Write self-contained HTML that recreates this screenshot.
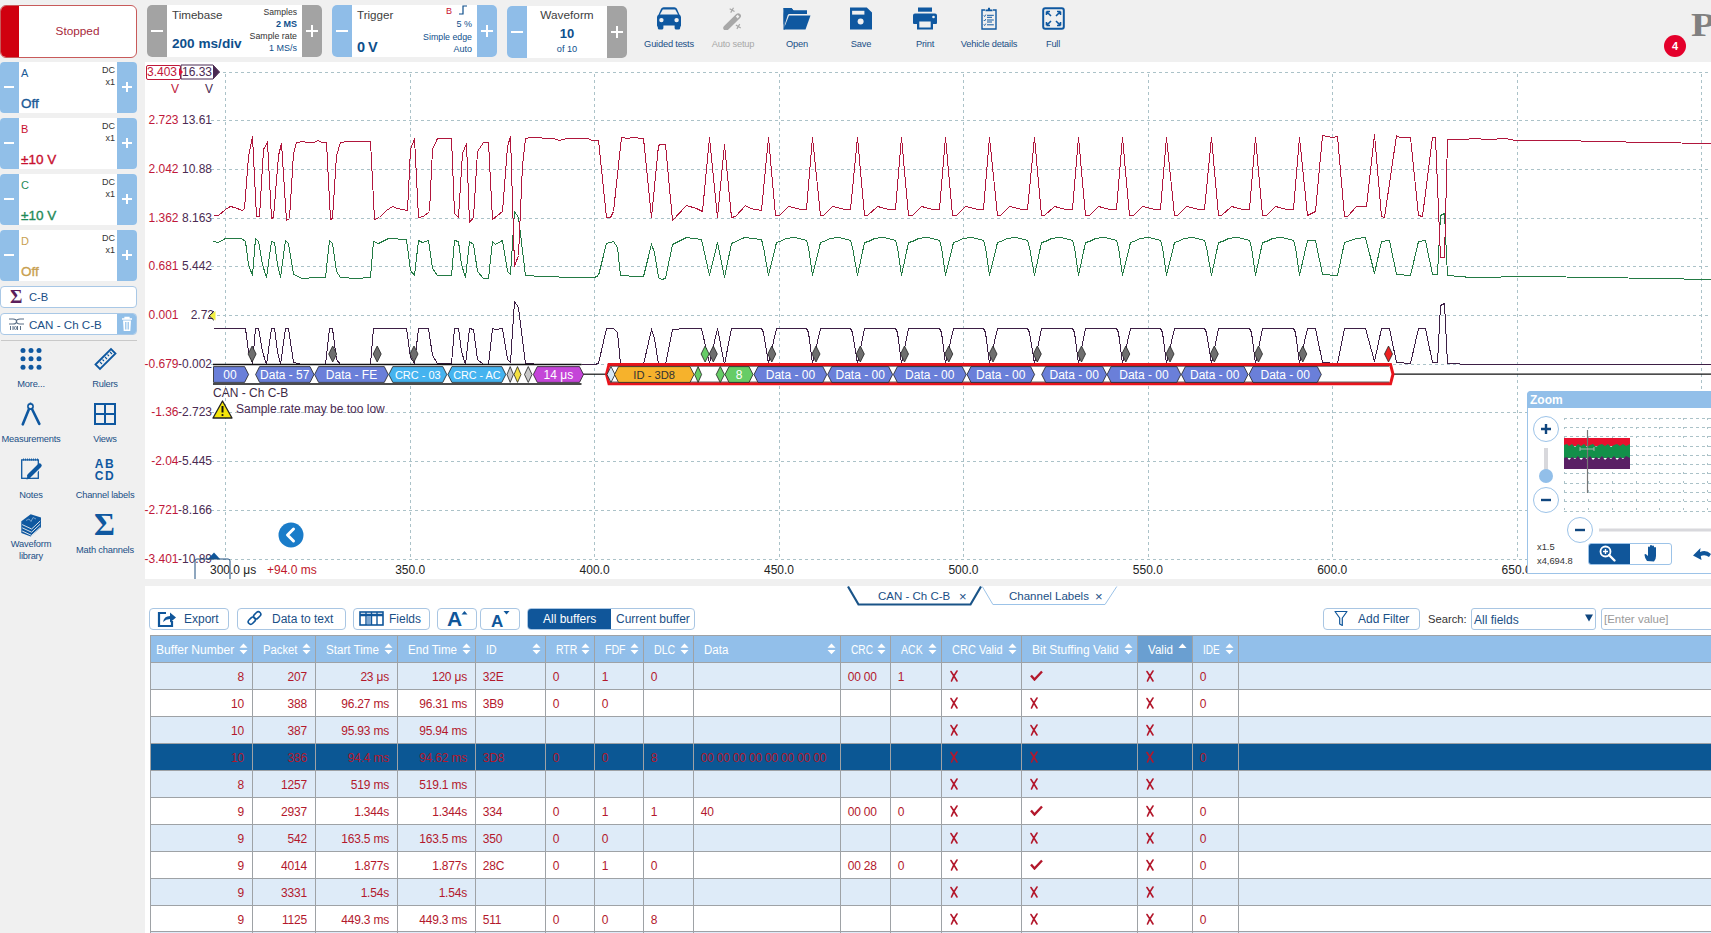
<!DOCTYPE html>
<html><head><meta charset="utf-8">
<style>
html,body{margin:0;padding:0;width:1711px;height:933px;overflow:hidden;background:#f0f0f0;font-family:"Liberation Sans",sans-serif;}
.a{position:absolute;}
.wb{position:absolute;background:#fff;}
.btn{position:absolute;width:20px;color:#fff;font-size:20px;text-align:center;}
.gray{background:#a3a3a3;}
.blue{background:#8fbde8;}
.t{position:absolute;white-space:nowrap;line-height:1;}
.dk{color:#333;}
.bl{color:#0e4f8c;}
.lbl{position:absolute;font-size:9.3px;letter-spacing:-0.2px;color:#1a4f86;text-align:center;white-space:nowrap;line-height:1;}
</style></head><body>

<!-- ===== TOP TOOLBAR ===== -->
<div class="a" style="left:0;top:0;width:1711px;height:62px;background:#f0f0f0;"></div>

<!-- Stopped -->
<div class="a" style="left:0;top:5px;width:135px;height:51px;background:#fff;border:1px solid #c85a5a;border-radius:6px;overflow:hidden;">
  <div class="a" style="left:0;top:0;width:18px;height:51px;background:#d0000f;"></div>
  <div class="t" style="left:18px;top:20px;width:117px;text-align:center;font-size:11.8px;color:#a8283a;">Stopped</div>
</div>

<!-- Timebase -->
<div class="wb" style="left:147px;top:5px;width:175px;height:52px;border-radius:5px;"></div>
<div class="btn gray" style="left:147px;top:5px;height:52px;border-radius:5px 0 0 5px;"><div class="a" style="left:4px;top:25px;width:12px;height:2px;background:#fff"></div></div>
<div class="btn gray" style="left:302px;top:5px;height:52px;border-radius:0 5px 5px 0;"><div class="a" style="left:4px;top:25px;width:12px;height:2px;background:#fff"></div><div class="a" style="left:9px;top:20px;width:2px;height:12px;background:#fff"></div></div>
<div class="t dk" style="left:172px;top:9px;font-size:11.6px;color:#404040;">Timebase</div>
<div class="t bl" style="left:172px;top:37px;font-size:13.6px;font-weight:bold;">200 ms/div</div>
<div class="t dk" style="left:240px;top:8px;width:57px;text-align:right;font-size:8.6px;">Samples</div>
<div class="t bl" style="left:240px;top:20px;width:57px;text-align:right;font-size:9px;font-weight:bold;">2 MS</div>
<div class="t dk" style="left:230px;top:32px;width:67px;text-align:right;font-size:8.8px;">Sample rate</div>
<div class="t bl" style="left:240px;top:44px;width:57px;text-align:right;font-size:9px;">1 MS/s</div>

<!-- Trigger -->
<div class="wb" style="left:332px;top:5px;width:165px;height:52px;border-radius:5px;"></div>
<div class="btn blue" style="left:332px;top:5px;height:52px;border-radius:5px 0 0 5px;"><div class="a" style="left:4px;top:25px;width:12px;height:2px;background:#fff"></div></div>
<div class="btn blue" style="left:477px;top:5px;height:52px;border-radius:0 5px 5px 0;"><div class="a" style="left:4px;top:25px;width:12px;height:2px;background:#fff"></div><div class="a" style="left:9px;top:20px;width:2px;height:12px;background:#fff"></div></div>
<div class="t dk" style="left:357px;top:9px;font-size:11.6px;color:#404040;">Trigger</div>
<div class="t bl" style="left:357px;top:40px;font-size:14.5px;font-weight:bold;letter-spacing:-0.6px;">0 V</div>
<div class="t" style="left:446px;top:7px;font-size:9px;color:#c8102e;">B</div>
<svg class="a" style="left:458px;top:5px" width="10" height="10"><path d="M1 9 H5 V1 H9" stroke="#0e4f8c" stroke-width="1.2" fill="none"/></svg>
<div class="t bl" style="left:420px;top:20px;width:52px;text-align:right;font-size:9px;">5 %</div>
<div class="t bl" style="left:400px;top:33px;width:72px;text-align:right;font-size:8.8px;">Simple edge</div>
<div class="t bl" style="left:420px;top:45px;width:52px;text-align:right;font-size:9px;">Auto</div>

<!-- Waveform -->
<div class="wb" style="left:507px;top:6px;width:120px;height:52px;border-radius:5px;"></div>
<div class="btn blue" style="left:507px;top:6px;height:52px;border-radius:5px 0 0 5px;"><div class="a" style="left:4px;top:25px;width:12px;height:2px;background:#fff"></div></div>
<div class="btn gray" style="left:607px;top:6px;height:52px;border-radius:0 5px 5px 0;"><div class="a" style="left:4px;top:25px;width:12px;height:2px;background:#fff"></div><div class="a" style="left:9px;top:20px;width:2px;height:12px;background:#fff"></div></div>
<div class="t dk" style="left:527px;top:10px;width:80px;text-align:center;font-size:11.8px;color:#404040;">Waveform</div>
<div class="t bl" style="left:527px;top:27px;width:80px;text-align:center;font-size:13px;font-weight:bold;">10</div>
<div class="t bl" style="left:527px;top:45px;width:80px;text-align:center;font-size:9.2px;">of 10</div>


<!-- car -->
<svg class="a" style="left:657px;top:7px" width="24" height="23" viewBox="0 0 24 23">
 <path d="M0 10.2 Q0 8.6 1.6 7.6 L4.1 1.8 Q4.8 0.3 6.6 0.3 H17.4 Q19.2 0.3 19.9 1.8 L22.4 7.6 Q24 8.6 24 10.2 V18.5 Q24 19.5 23.2 19.9 V21 Q23.2 22.6 21.4 22.6 H19.3 Q17.6 22.6 17.6 21 V18.6 H6.4 V21 Q6.4 22.6 4.7 22.6 H2.6 Q0.8 22.6 0.8 21 V19.9 Q0 19.5 0 18.5 Z" fill="#0f58a0"/>
 <path d="M5.8 2.6 H18.2 L21 7.6 H3 Z" fill="#f0f0f0"/>
 <circle cx="4.4" cy="13.1" r="2.2" fill="#f0f0f0"/>
 <circle cx="19.6" cy="13.1" r="2.2" fill="#f0f0f0"/>
</svg>
<!-- wand -->
<svg class="a" style="left:722px;top:7px" width="21" height="23" viewBox="0 0 21 23">
 <path d="M4 21 L16.2 9" stroke="#a8a8a8" stroke-width="5.4" stroke-linecap="round"/>
 <path d="M13.8 9.6 L15.6 7.8 L17.4 9.6 L15.6 11.4 Z" fill="#f0f0f0"/>
 <path d="M7.3 3.2 H12.9 M10.1 0.4 V6" stroke="#a8a8a8" stroke-width="1.2" transform="rotate(30 10.1 3.2)"/>
 <path d="M13.5 19.5 H19.1 M16.3 16.7 V22.3" stroke="#a8a8a8" stroke-width="1.2" transform="rotate(30 16.3 19.5)"/>
</svg>
<!-- folder -->
<svg class="a" style="left:783px;top:7px" width="28" height="23" viewBox="0 0 28 23">
 <path d="M0.5 1 H8.5 L10.5 3.5 H24 V7 H6.5 Q5.2 7 4.7 8.2 L1.7 18 Q1.5 18.5 1.5 17.5 V7 Z" fill="#0f58a0"/>
 <path d="M0.5 1 H8.5 L10.5 3.5 H24 V6 H6 Q4.5 6 4 7.5 L0.5 18 Z" fill="#0f58a0"/>
 <path d="M6 8.5 H27.5 L22.5 22.5 H0.5 Z" fill="#0f58a0"/>
 <path d="M0.5 1 V22.5 H2 Z" fill="#0f58a0"/>
</svg>
<!-- save -->
<svg class="a" style="left:850px;top:7px" width="22" height="23" viewBox="0 0 22 23">
 <path d="M0 0.5 H16.8 L22 5.5 V22.5 H0 Z" fill="#0f58a0"/>
 <rect x="2.1" y="3.8" width="12.3" height="3.8" fill="#f0f0f0"/>
 <circle cx="10.6" cy="14.6" r="3" fill="#f0f0f0"/>
</svg>
<!-- print -->
<svg class="a" style="left:913px;top:7px" width="24" height="23" viewBox="0 0 24 23">
 <rect x="5" y="0.5" width="14" height="4.2" fill="#0f58a0"/>
 <path d="M2 6.5 H22 Q24 6.5 24 8.5 V16 Q24 17 23 17 H20 V22.5 H4 V17 H1 Q0 17 0 16 V8.5 Q0 6.5 2 6.5 Z" fill="#0f58a0"/>
 <rect x="6.3" y="14.5" width="11.4" height="6" fill="#f0f0f0"/>
 <circle cx="20.5" cy="10" r="1.3" fill="#f0f0f0"/>
</svg>
<!-- clipboard -->
<svg class="a" style="left:981px;top:7px" width="16" height="23" viewBox="0 0 16 23">
 <path d="M4 3 H1 V22 H15 V3 H12" fill="none" stroke="#0f58a0" stroke-width="1.4"/>
 <path d="M4.5 4.2 H11.5 V2.5 H9.2 Q9.2 0.5 8 0.5 Q6.8 0.5 6.8 2.5 H4.5 Z" fill="#0f58a0"/>
 <path d="M2.8 8.5 L3.6 9.5 L4.8 7.6 M2.8 13 L3.6 14 L4.8 12.1 M2.8 17.5 L3.6 18.5 L4.8 16.6" stroke="#0f58a0" stroke-width="0.9" fill="none"/>
 <path d="M6 8.3 H12.8 M6 10.3 H11 M6 13 H12.8 M6 15 H11 M6 17.8 H12.8" stroke="#0f58a0" stroke-width="1" fill="none"/>
</svg>
<!-- full -->
<svg class="a" style="left:1042px;top:7px" width="23" height="23" viewBox="0 0 23 23">
 <rect x="1.2" y="1.2" width="20.6" height="20.6" rx="2" fill="none" stroke="#0f58a0" stroke-width="2"/>
 <path d="M4.5 4.5 L9 9 M4.5 4.5 H8 M4.5 4.5 V8" stroke="#0f58a0" stroke-width="1.6" fill="none"/>
 <path d="M18.5 4.5 L14 9 M18.5 4.5 H15 M18.5 4.5 V8" stroke="#0f58a0" stroke-width="1.6" fill="none"/>
 <path d="M4.5 18.5 L9 14 M4.5 18.5 H8 M4.5 18.5 V15" stroke="#0f58a0" stroke-width="1.6" fill="none"/>
 <path d="M18.5 18.5 L14 14 M18.5 18.5 H15 M18.5 18.5 V15" stroke="#0f58a0" stroke-width="1.6" fill="none"/>
</svg>
<div class="lbl" style="left:629px;top:40px;width:80px;">Guided tests</div>
<div class="lbl" style="left:693px;top:40px;width:80px;color:#a8a8a8;">Auto setup</div>
<div class="lbl" style="left:757px;top:40px;width:80px;">Open</div>
<div class="lbl" style="left:821px;top:40px;width:80px;">Save</div>
<div class="lbl" style="left:885px;top:40px;width:80px;">Print</div>
<div class="lbl" style="left:949px;top:40px;width:80px;">Vehicle details</div>
<div class="lbl" style="left:1013px;top:40px;width:80px;">Full</div>
<!-- badge & logo -->
<div class="a" style="left:1664px;top:35px;width:22px;height:22px;border-radius:11px;background:#e4002b;color:#fff;font-size:11px;font-weight:bold;text-align:center;line-height:22px;">4</div>
<div class="t" style="left:1691px;top:9px;font-family:'Liberation Serif',serif;font-size:33px;font-weight:bold;color:#808080;transform:scaleX(1.2);transform-origin:0 0;">P</div>


<!-- ===== LEFT SIDEBAR ===== -->

<div class="a" style="left:0;top:62px;width:137px;height:51px;background:#fff;border-radius:4px;overflow:hidden;">
 <div class="a" style="left:0;top:0;width:19px;height:51px;background:#91bfe8;"><div class="a" style="left:4px;top:24px;width:10px;height:2px;background:#fff"></div></div>
 <div class="a" style="left:117px;top:0;width:20px;height:51px;background:#91bfe8;"><div class="a" style="left:5px;top:24px;width:10px;height:2px;background:#fff"></div><div class="a" style="left:9px;top:20px;width:2px;height:10px;background:#fff"></div></div>
 <div class="t" style="left:21px;top:6px;font-size:11px;color:#1a5a96;">A</div>
 <div class="t" style="left:80px;top:4px;width:35px;text-align:right;font-size:9px;color:#333;">DC</div>
 <div class="t" style="left:80px;top:16px;width:35px;text-align:right;font-size:9px;color:#333;">x1</div>
 <div class="t" style="left:21px;top:35px;font-size:13.5px;-webkit-text-stroke:0.35px currentColor;color:#1a5a96;">Off</div>
</div>
<div class="a" style="left:0;top:118px;width:137px;height:51px;background:#fff;border-radius:4px;overflow:hidden;">
 <div class="a" style="left:0;top:0;width:19px;height:51px;background:#91bfe8;"><div class="a" style="left:4px;top:24px;width:10px;height:2px;background:#fff"></div></div>
 <div class="a" style="left:117px;top:0;width:20px;height:51px;background:#91bfe8;"><div class="a" style="left:5px;top:24px;width:10px;height:2px;background:#fff"></div><div class="a" style="left:9px;top:20px;width:2px;height:10px;background:#fff"></div></div>
 <div class="t" style="left:21px;top:6px;font-size:11px;color:#c8102e;">B</div>
 <div class="t" style="left:80px;top:4px;width:35px;text-align:right;font-size:9px;color:#333;">DC</div>
 <div class="t" style="left:80px;top:16px;width:35px;text-align:right;font-size:9px;color:#333;">x1</div>
 <div class="t" style="left:21px;top:35px;font-size:13.5px;-webkit-text-stroke:0.35px currentColor;color:#c8102e;">±10 V</div>
</div>
<div class="a" style="left:0;top:174px;width:137px;height:51px;background:#fff;border-radius:4px;overflow:hidden;">
 <div class="a" style="left:0;top:0;width:19px;height:51px;background:#91bfe8;"><div class="a" style="left:4px;top:24px;width:10px;height:2px;background:#fff"></div></div>
 <div class="a" style="left:117px;top:0;width:20px;height:51px;background:#91bfe8;"><div class="a" style="left:5px;top:24px;width:10px;height:2px;background:#fff"></div><div class="a" style="left:9px;top:20px;width:2px;height:10px;background:#fff"></div></div>
 <div class="t" style="left:21px;top:6px;font-size:11px;color:#1f8a58;">C</div>
 <div class="t" style="left:80px;top:4px;width:35px;text-align:right;font-size:9px;color:#333;">DC</div>
 <div class="t" style="left:80px;top:16px;width:35px;text-align:right;font-size:9px;color:#333;">x1</div>
 <div class="t" style="left:21px;top:35px;font-size:13.5px;-webkit-text-stroke:0.35px currentColor;color:#1f8a58;">±10 V</div>
</div>
<div class="a" style="left:0;top:230px;width:137px;height:51px;background:#fff;border-radius:4px;overflow:hidden;">
 <div class="a" style="left:0;top:0;width:19px;height:51px;background:#91bfe8;"><div class="a" style="left:4px;top:24px;width:10px;height:2px;background:#fff"></div></div>
 <div class="a" style="left:117px;top:0;width:20px;height:51px;background:#91bfe8;"><div class="a" style="left:5px;top:24px;width:10px;height:2px;background:#fff"></div><div class="a" style="left:9px;top:20px;width:2px;height:10px;background:#fff"></div></div>
 <div class="t" style="left:21px;top:6px;font-size:11px;color:#c8a050;">D</div>
 <div class="t" style="left:80px;top:4px;width:35px;text-align:right;font-size:9px;color:#333;">DC</div>
 <div class="t" style="left:80px;top:16px;width:35px;text-align:right;font-size:9px;color:#333;">x1</div>
 <div class="t" style="left:21px;top:35px;font-size:13.5px;-webkit-text-stroke:0.35px currentColor;color:#c8a050;">Off</div>
</div>
<div class="a" style="left:0;top:286px;width:135px;height:20px;background:#fff;border:1px solid #a9c8e6;border-radius:4px;"></div>
<div class="t" style="left:10px;top:287px;font-family:'Liberation Serif',serif;font-size:19px;font-weight:bold;color:#5c1f5c;">&#931;</div>
<div class="t" style="left:29px;top:292px;font-size:11.2px;color:#1a4f86;">C-B</div>
<div class="a" style="left:0;top:313px;width:135px;height:20px;background:#fff;border:1px solid #a9c8e6;border-radius:4px;overflow:hidden;">
 <div class="a" style="left:116px;top:0;width:20px;height:20px;background:#91bfe8;"></div>
</div>
<svg class="a" style="left:120px;top:316px" width="14" height="16" viewBox="0 0 14 16"><path d="M2 3 H12 M5 3 V1.5 H9 V3" stroke="#fff" stroke-width="1.3" fill="none"/><path d="M3 4.5 H11 L10.3 15 H3.7 Z" fill="#fff"/><path d="M5.5 6 V13.5 M7 6 V13.5 M8.5 6 V13.5" stroke="#91bfe8" stroke-width="0.8"/></svg>
<svg class="a" style="left:9px;top:318px" width="15" height="12" viewBox="0 0 15 12"><path d="M0 1 H4 Q7.5 1 7.5 3.5 Q7.5 6 11 6 H15 M0 6 H4 Q7.5 6 7.5 3.5 Q7.5 1 11 1 H15" stroke="#5a6f86" stroke-width="1.2" fill="none"/><path d="M1.5 8 V12 M4 8 V12 M8.5 8 V12 M11.5 8 V12" stroke="#5a6f86" stroke-width="1"/><circle cx="6.5" cy="10" r="1.4" fill="none" stroke="#5a6f86" stroke-width="0.9"/></svg>
<div class="t" style="left:29px;top:319px;font-size:11.6px;color:#1a4f86;">CAN - Ch C-B</div>
<div class="a" style="left:1px;top:340px;width:136px;height:1px;background:#c9c9c9;"></div>

<!-- more -->
<svg class="a" style="left:19px;top:347px" width="24" height="24" viewBox="0 0 24 24" fill="#0f58a0">
 <circle cx="4" cy="3.5" r="2.5"/><circle cx="12" cy="3.5" r="2.5"/><circle cx="20" cy="3.5" r="2.5"/>
 <circle cx="4" cy="11.8" r="2.5"/><circle cx="12" cy="11.8" r="2.5"/><circle cx="20" cy="11.8" r="2.5"/>
 <circle cx="4" cy="20.2" r="2.5"/><circle cx="12" cy="20.2" r="2.5"/><circle cx="20" cy="20.2" r="2.5"/>
</svg>
<div class="lbl" style="left:-9px;top:380px;width:80px;">More...</div>
<!-- rulers -->
<svg class="a" style="left:94px;top:347px" width="23" height="24" viewBox="0 0 23 24">
 <path d="M1.5 17.5 L17 2 L21.5 6.5 L6 22 Z" fill="none" stroke="#0f58a0" stroke-width="1.8"/>
 <path d="M6 15 L8 17 M8.5 12.5 L10 14 M11 10 L13 12 M13.5 7.5 L15 9 M16 5 L18 7" stroke="#0f58a0" stroke-width="1.1"/>
</svg>
<div class="lbl" style="left:65px;top:380px;width:80px;">Rulers</div>
<!-- measurements -->
<svg class="a" style="left:21px;top:402px" width="20" height="24" viewBox="0 0 20 24">
 <circle cx="9.5" cy="4.5" r="2.6" fill="none" stroke="#0f58a0" stroke-width="1.6"/>
 <path d="M9.5 0.5 V2" stroke="#0f58a0" stroke-width="1.6"/>
 <path d="M8 7 L1.8 22.3 M11 7 L18.3 21.8" stroke="#0f58a0" stroke-width="2.6" stroke-linecap="round"/>
</svg>
<div class="lbl" style="left:-9px;top:435px;width:80px;">Measurements</div>
<!-- views -->
<svg class="a" style="left:94px;top:403px" width="22" height="22" viewBox="0 0 22 22">
 <rect x="1" y="1" width="20" height="20" fill="none" stroke="#0f58a0" stroke-width="2"/>
 <path d="M11 1 V21 M1 11 H21" stroke="#0f58a0" stroke-width="2"/>
</svg>
<div class="lbl" style="left:65px;top:435px;width:80px;">Views</div>
<!-- notes -->
<svg class="a" style="left:21px;top:458px" width="22" height="23" viewBox="0 0 22 23">
 <rect x="0.7" y="1.9" width="16.6" height="18.4" fill="none" stroke="#0f58a0" stroke-width="1.3"/>
 <path d="M2.5 0.5 V2.5 M4.5 0.5 V2.5 M6.5 0.5 V2.5 M8.5 0.5 V2.5 M10.5 0.5 V2.5 M12.5 0.5 V2.5 M14.5 0.5 V2.5 M16.5 0.5 V2.5" stroke="#0f58a0" stroke-width="0.9"/>
 <path d="M8.5 17.5 L17.5 8.5" stroke="#f0f0f0" stroke-width="6.5"/>
 <path d="M8.2 17.8 L18.6 7.4" stroke="#0f58a0" stroke-width="4.2" stroke-linecap="round"/>
 <path d="M5.5 21.6 L6.8 17.3 L9.8 20.3 Z" fill="#0f58a0"/>
</svg>
<div class="lbl" style="left:-9px;top:491px;width:80px;">Notes</div>
<!-- channel labels -->
<div class="t" style="left:94px;top:459px;width:22px;text-align:center;font-size:12px;font-weight:bold;color:#0f58a0;letter-spacing:1.5px;line-height:11.5px;">AB<br>CD</div>
<div class="lbl" style="left:65px;top:491px;width:80px;">Channel labels</div>
<!-- waveform library -->
<svg class="a" style="left:21px;top:514px" width="21" height="23" viewBox="0 0 21 23">
 <path d="M0.3 7.3 L9.7 0.2 L20 3.5 V13.2 L9.7 22.6 L0.3 19 Z" fill="#0f58a0"/>
 <path d="M1.2 10.6 L10.6 15 L19.2 7 M1.2 13.8 L10.6 18.2 L19.2 10.2 M1.2 17 L10.6 21.4 L19.2 13.4" fill="none" stroke="#f0f0f0" stroke-width="0.9"/>
 <path d="M5 6.5 L8 5 L10 7.5 L12 3.5 L15 5" fill="none" stroke="#7fa8d2" stroke-width="0.9"/>
</svg>
<div class="lbl" style="left:-9px;top:540px;width:80px;">Waveform</div>
<div class="lbl" style="left:-9px;top:552px;width:80px;">library</div>
<!-- math -->
<div class="t" style="left:94px;top:511px;font-family:'Liberation Serif',serif;font-size:32px;font-weight:bold;color:#0f58a0;line-height:26px;">&#931;</div>
<div class="lbl" style="left:65px;top:546px;width:80px;">Math channels</div>


<!-- ===== CHART ===== -->
<div class="a" style="left:145px;top:62px;width:1566px;height:517px;background:#fff;"></div>
<svg class="a" style="left:0;top:0" width="1711" height="933" viewBox="0 0 1711 933">
<line x1="211" y1="72.5" x2="1711" y2="72.5" stroke="#abc2c8" stroke-width="1" stroke-dasharray="3 3"/>
<line x1="211" y1="120.5" x2="1711" y2="120.5" stroke="#abc2c8" stroke-width="1" stroke-dasharray="3 3"/>
<line x1="211" y1="169.5" x2="1711" y2="169.5" stroke="#abc2c8" stroke-width="1" stroke-dasharray="3 3"/>
<line x1="211" y1="218.5" x2="1711" y2="218.5" stroke="#abc2c8" stroke-width="1" stroke-dasharray="3 3"/>
<line x1="211" y1="266.5" x2="1711" y2="266.5" stroke="#abc2c8" stroke-width="1" stroke-dasharray="3 3"/>
<line x1="211" y1="315.5" x2="1711" y2="315.5" stroke="#abc2c8" stroke-width="1" stroke-dasharray="3 3"/>
<line x1="211" y1="364.5" x2="1711" y2="364.5" stroke="#abc2c8" stroke-width="1" stroke-dasharray="3 3"/>
<line x1="211" y1="412.5" x2="1711" y2="412.5" stroke="#abc2c8" stroke-width="1" stroke-dasharray="3 3"/>
<line x1="211" y1="461.5" x2="1711" y2="461.5" stroke="#abc2c8" stroke-width="1" stroke-dasharray="3 3"/>
<line x1="211" y1="510.5" x2="1711" y2="510.5" stroke="#abc2c8" stroke-width="1" stroke-dasharray="3 3"/>
<line x1="211" y1="559.5" x2="1711" y2="559.5" stroke="#abc2c8" stroke-width="1" stroke-dasharray="3 3"/>
<line x1="225.5" y1="74" x2="225.5" y2="560" stroke="#abc2c8" stroke-width="1" stroke-dasharray="3 3"/>
<line x1="410.5" y1="74" x2="410.5" y2="560" stroke="#abc2c8" stroke-width="1" stroke-dasharray="3 3"/>
<line x1="594.5" y1="74" x2="594.5" y2="560" stroke="#abc2c8" stroke-width="1" stroke-dasharray="3 3"/>
<line x1="779.5" y1="74" x2="779.5" y2="560" stroke="#abc2c8" stroke-width="1" stroke-dasharray="3 3"/>
<line x1="963.5" y1="74" x2="963.5" y2="560" stroke="#abc2c8" stroke-width="1" stroke-dasharray="3 3"/>
<line x1="1148.5" y1="74" x2="1148.5" y2="560" stroke="#abc2c8" stroke-width="1" stroke-dasharray="3 3"/>
<line x1="1332.5" y1="74" x2="1332.5" y2="560" stroke="#abc2c8" stroke-width="1" stroke-dasharray="3 3"/>
<line x1="1517.5" y1="74" x2="1517.5" y2="560" stroke="#abc2c8" stroke-width="1" stroke-dasharray="3 3"/>
<line x1="1701.5" y1="74" x2="1701.5" y2="560" stroke="#abc2c8" stroke-width="1" stroke-dasharray="3 3"/>
<polyline points="213.5,328.5 218.5,328.5 225.5,328.5 241.5,328.5 245.5,328.5 248.5,351.5 252.5,363.5 255.5,328.5 258.5,328.5 262.5,351.5 266.5,364.5 271.5,328.5 274.5,328.5 277.5,351.5 280.5,364.5 285.5,328.5 288.5,328.5 293.5,362.5 302.5,364.5 316.5,364.5 325.5,364.5 329.5,328.5 332.5,328.5 336.5,359.5 340.5,364.5 356.5,364.5 370.5,364.5 373.5,328.5 378.5,328.5 388.5,328.5 406.5,328.5 410.5,357.5 414.5,363.5 418.5,328.5 422.5,328.5 428.5,328.5 432.5,355.5 437.5,363.5 451.5,363.5 454.5,328.5 458.5,328.5 461.5,351.5 465.5,364.5 469.5,328.5 473.5,329.5 477.5,359.5 483.5,364.5 488.5,364.5 492.5,328.5 495.5,329.5 502.5,328.5 507.5,359.5 510.5,362.5 514.5,301.5 518.5,307.5 525.5,363.5 541.5,364.5 576.5,364.5 594.5,364.5 598.5,363.5 606.5,328.5 613.5,328.5 617.5,332.5 620.5,363.5 636.5,364.5 643.5,364.5 651.5,329.5 654.5,338.5 658.5,364.5 661.5,364.5 665.5,364.5 672.5,329.5 686.5,328.5 701.5,328.5 709.5,363.5 717.5,328.5 724.5,364.5 731.5,328.5 744.5,328.5 761.5,328.5 763.5,332.5 768.5,363.5 776.5,328.5 779.5,328.5 786.5,328.5 793.5,328.5 799.5,328.5 806.5,328.5 808.5,332.5 812.5,363.5 820.5,328.5 823.5,328.5 830.5,328.5 837.5,328.5 843.5,328.5 850.5,328.5 852.5,332.5 857.5,363.5 864.5,328.5 868.5,328.5 874.5,328.5 882.5,328.5 888.5,328.5 895.5,328.5 897.5,332.5 901.5,363.5 908.5,328.5 912.5,328.5 918.5,328.5 926.5,328.5 932.5,328.5 939.5,328.5 941.5,332.5 945.5,363.5 953.5,328.5 956.5,328.5 963.5,328.5 970.5,328.5 976.5,328.5 983.5,328.5 985.5,332.5 989.5,363.5 997.5,328.5 1000.5,328.5 1007.5,328.5 1014.5,328.5 1020.5,328.5 1027.5,328.5 1029.5,332.5 1034.5,363.5 1041.5,328.5 1045.5,328.5 1051.5,328.5 1059.5,328.5 1065.5,328.5 1072.5,328.5 1074.5,332.5 1078.5,363.5 1085.5,328.5 1089.5,328.5 1095.5,328.5 1103.5,328.5 1109.5,328.5 1116.5,328.5 1118.5,332.5 1122.5,363.5 1130.5,328.5 1133.5,328.5 1140.5,328.5 1147.5,328.5 1153.5,328.5 1160.5,328.5 1162.5,332.5 1166.5,363.5 1174.5,328.5 1177.5,328.5 1184.5,328.5 1191.5,328.5 1197.5,328.5 1204.5,328.5 1206.5,332.5 1211.5,363.5 1218.5,328.5 1222.5,328.5 1228.5,328.5 1236.5,328.5 1242.5,328.5 1249.5,328.5 1251.5,332.5 1255.5,363.5 1262.5,328.5 1266.5,328.5 1272.5,328.5 1280.5,328.5 1286.5,328.5 1293.5,328.5 1295.5,332.5 1299.5,363.5 1307.5,328.5 1315.5,328.5 1322.5,362.5 1337.5,363.5 1344.5,328.5 1356.5,328.5 1365.5,328.5 1374.5,361.5 1381.5,328.5 1389.5,328.5 1396.5,362.5 1410.5,363.5 1418.5,328.5 1425.5,328.5 1432.5,362.5 1437.5,362.5 1440.5,305.5 1444.5,303.5 1447.5,363.5 1471.5,364.5 1530.5,364.5 1600.5,364.5 1711.5,364.5" fill="none" stroke="#3d1f45" stroke-width="1" shape-rendering="crispEdges"/>
<polyline points="213.5,241.5 218.5,242.5 225.5,238.5 241.5,238.5 245.5,241.5 248.5,264.5 252.5,275.5 255.5,238.5 258.5,241.5 262.5,264.5 266.5,277.5 271.5,241.5 274.5,242.5 277.5,264.5 280.5,277.5 285.5,240.5 288.5,243.5 293.5,274.5 302.5,278.5 316.5,277.5 325.5,277.5 329.5,240.5 332.5,243.5 336.5,271.5 340.5,277.5 356.5,278.5 370.5,277.5 373.5,241.5 378.5,243.5 388.5,238.5 406.5,239.5 410.5,270.5 414.5,275.5 418.5,240.5 422.5,242.5 428.5,240.5 432.5,268.5 437.5,275.5 451.5,275.5 454.5,240.5 458.5,241.5 461.5,264.5 465.5,277.5 469.5,241.5 473.5,244.5 477.5,271.5 483.5,278.5 488.5,278.5 492.5,241.5 495.5,244.5 502.5,240.5 507.5,271.5 510.5,274.5 514.5,211.5 518.5,217.5 525.5,275.5 541.5,276.5 576.5,277.5 594.5,277.5 598.5,275.5 606.5,243.5 613.5,241.5 617.5,247.5 620.5,275.5 636.5,276.5 643.5,276.5 651.5,244.5 654.5,252.5 658.5,277.5 661.5,279.5 665.5,278.5 672.5,244.5 686.5,237.5 701.5,239.5 709.5,275.5 717.5,242.5 724.5,277.5 731.5,243.5 744.5,237.5 761.5,239.5 763.5,247.5 768.5,275.5 776.5,242.5 779.5,241.5 786.5,238.5 793.5,237.5 799.5,238.5 806.5,240.5 808.5,247.5 812.5,275.5 820.5,242.5 823.5,241.5 830.5,238.5 837.5,237.5 843.5,238.5 850.5,240.5 852.5,247.5 857.5,275.5 864.5,242.5 868.5,241.5 874.5,238.5 882.5,237.5 888.5,238.5 895.5,240.5 897.5,247.5 901.5,275.5 908.5,242.5 912.5,241.5 918.5,238.5 926.5,237.5 932.5,238.5 939.5,240.5 941.5,247.5 945.5,275.5 953.5,242.5 956.5,241.5 963.5,238.5 970.5,237.5 976.5,238.5 983.5,240.5 985.5,247.5 989.5,275.5 997.5,242.5 1000.5,241.5 1007.5,238.5 1014.5,237.5 1020.5,238.5 1027.5,240.5 1029.5,247.5 1034.5,275.5 1041.5,242.5 1045.5,241.5 1051.5,238.5 1059.5,237.5 1065.5,238.5 1072.5,240.5 1074.5,247.5 1078.5,275.5 1085.5,242.5 1089.5,241.5 1095.5,238.5 1103.5,237.5 1109.5,238.5 1116.5,240.5 1118.5,247.5 1122.5,275.5 1130.5,242.5 1133.5,241.5 1140.5,238.5 1147.5,237.5 1153.5,238.5 1160.5,240.5 1162.5,247.5 1166.5,275.5 1174.5,242.5 1177.5,241.5 1184.5,238.5 1191.5,237.5 1197.5,238.5 1204.5,240.5 1206.5,247.5 1211.5,275.5 1218.5,242.5 1222.5,241.5 1228.5,238.5 1236.5,237.5 1242.5,238.5 1249.5,240.5 1251.5,247.5 1255.5,275.5 1262.5,242.5 1266.5,241.5 1272.5,238.5 1280.5,237.5 1286.5,238.5 1293.5,240.5 1295.5,247.5 1299.5,275.5 1307.5,240.5 1315.5,240.5 1322.5,274.5 1337.5,275.5 1344.5,242.5 1356.5,238.5 1365.5,237.5 1374.5,273.5 1381.5,241.5 1389.5,240.5 1396.5,274.5 1410.5,275.5 1418.5,241.5 1425.5,240.5 1432.5,274.5 1437.5,274.5 1440.5,215.5 1444.5,213.5 1447.5,275.5 1471.5,277.5 1530.5,276.5 1600.5,277.5 1711.5,279.5" fill="none" stroke="#237a44" stroke-width="1" shape-rendering="crispEdges"/>
<polyline points="213.5,215.5 218.5,215.5 225.5,209.5 230.5,206.5 234.5,207.5 242.5,210.5 244.5,208.5 248.5,156.5 252.5,136.5 256.5,216.5 259.5,216.5 263.5,149.5 267.5,142.5 271.5,218.5 273.5,217.5 278.5,155.5 281.5,143.5 286.5,220.5 289.5,218.5 293.5,153.5 296.5,142.5 303.5,141.5 306.5,142.5 314.5,142.5 317.5,140.5 322.5,142.5 326.5,142.5 330.5,219.5 332.5,218.5 336.5,155.5 340.5,142.5 347.5,141.5 353.5,141.5 370.5,141.5 374.5,219.5 379.5,217.5 386.5,210.5 392.5,206.5 397.5,208.5 407.5,210.5 410.5,149.5 414.5,138.5 418.5,217.5 423.5,216.5 429.5,211.5 432.5,149.5 437.5,138.5 451.5,138.5 454.5,213.5 458.5,217.5 462.5,153.5 466.5,143.5 469.5,222.5 473.5,217.5 477.5,151.5 483.5,142.5 488.5,142.5 492.5,219.5 502.5,211.5 507.5,146.5 510.5,136.5 514.5,266.5 518.5,255.5 522.5,165.5 525.5,138.5 530.5,137.5 553.5,138.5 559.5,140.5 566.5,138.5 587.5,138.5 592.5,140.5 598.5,140.5 606.5,217.5 610.5,217.5 613.5,211.5 621.5,137.5 627.5,138.5 632.5,137.5 643.5,138.5 651.5,217.5 658.5,145.5 660.5,144.5 665.5,144.5 672.5,220.5 686.5,205.5 696.5,208.5 702.5,211.5 709.5,137.5 717.5,217.5 724.5,144.5 731.5,217.5 735.5,216.5 745.5,205.5 750.5,208.5 761.5,210.5 768.5,137.5 775.5,215.5 779.5,215.5 788.5,206.5 793.5,207.5 800.5,209.5 806.5,209.5 812.5,137.5 820.5,215.5 823.5,215.5 832.5,206.5 837.5,207.5 844.5,209.5 850.5,209.5 857.5,137.5 864.5,215.5 867.5,215.5 877.5,206.5 881.5,207.5 888.5,209.5 895.5,209.5 901.5,137.5 908.5,215.5 912.5,215.5 921.5,206.5 925.5,207.5 932.5,209.5 939.5,209.5 945.5,137.5 952.5,215.5 956.5,215.5 965.5,206.5 970.5,207.5 977.5,209.5 983.5,209.5 989.5,137.5 997.5,215.5 1000.5,215.5 1009.5,206.5 1014.5,207.5 1021.5,209.5 1027.5,209.5 1034.5,137.5 1041.5,215.5 1044.5,215.5 1054.5,206.5 1058.5,207.5 1065.5,209.5 1072.5,209.5 1078.5,137.5 1085.5,215.5 1089.5,215.5 1098.5,206.5 1102.5,207.5 1109.5,209.5 1116.5,209.5 1122.5,137.5 1129.5,215.5 1133.5,215.5 1142.5,206.5 1147.5,207.5 1154.5,209.5 1160.5,209.5 1166.5,137.5 1174.5,215.5 1177.5,215.5 1186.5,206.5 1191.5,207.5 1198.5,209.5 1204.5,209.5 1211.5,137.5 1218.5,215.5 1221.5,215.5 1231.5,206.5 1235.5,207.5 1242.5,209.5 1249.5,209.5 1255.5,137.5 1262.5,215.5 1266.5,215.5 1275.5,206.5 1279.5,207.5 1286.5,209.5 1293.5,209.5 1299.5,137.5 1307.5,215.5 1315.5,211.5 1322.5,135.5 1332.5,137.5 1337.5,136.5 1344.5,216.5 1347.5,216.5 1356.5,206.5 1366.5,206.5 1374.5,134.5 1381.5,216.5 1384.5,217.5 1396.5,135.5 1399.5,137.5 1410.5,137.5 1418.5,215.5 1422.5,216.5 1432.5,137.5 1435.5,137.5 1440.5,257.5 1444.5,257.5 1447.5,139.5 1466.5,139.5 1471.5,138.5 1489.5,139.5 1505.5,138.5 1515.5,140.5 1530.5,140.5 1560.5,140.5 1600.5,141.5 1650.5,142.5 1711.5,143.5" fill="none" stroke="#b0163c" stroke-width="1" shape-rendering="crispEdges"/>
<path d="M252.1 346.0 L256.1 354.0 L252.1 362.0 L248.1 354.0 Z" fill="#6e6e6e" stroke="#222" stroke-width="0.8"/>
<path d="M332.7 346.0 L336.7 354.0 L332.7 362.0 L328.7 354.0 Z" fill="#6e6e6e" stroke="#222" stroke-width="0.8"/>
<path d="M377.2 346.0 L381.2 354.0 L377.2 362.0 L373.2 354.0 Z" fill="#6e6e6e" stroke="#222" stroke-width="0.8"/>
<path d="M414.0 346.0 L418.0 354.0 L414.0 362.0 L410.0 354.0 Z" fill="#6e6e6e" stroke="#222" stroke-width="0.8"/>
<path d="M705.1 346.0 L709.1 354.0 L705.1 362.0 L701.1 354.0 Z" fill="#66cc66" stroke="#222" stroke-width="0.8"/>
<path d="M771.8 346.0 L775.8 354.0 L771.8 362.0 L767.8 354.0 Z" fill="#6e6e6e" stroke="#222" stroke-width="0.8"/>
<path d="M816.0 346.0 L820.0 354.0 L816.0 362.0 L812.0 354.0 Z" fill="#6e6e6e" stroke="#222" stroke-width="0.8"/>
<path d="M860.3 346.0 L864.3 354.0 L860.3 362.0 L856.3 354.0 Z" fill="#6e6e6e" stroke="#222" stroke-width="0.8"/>
<path d="M904.5 346.0 L908.5 354.0 L904.5 362.0 L900.5 354.0 Z" fill="#6e6e6e" stroke="#222" stroke-width="0.8"/>
<path d="M948.8 346.0 L952.8 354.0 L948.8 362.0 L944.8 354.0 Z" fill="#6e6e6e" stroke="#222" stroke-width="0.8"/>
<path d="M993.0 346.0 L997.0 354.0 L993.0 362.0 L989.0 354.0 Z" fill="#6e6e6e" stroke="#222" stroke-width="0.8"/>
<path d="M1037.3 346.0 L1041.3 354.0 L1037.3 362.0 L1033.3 354.0 Z" fill="#6e6e6e" stroke="#222" stroke-width="0.8"/>
<path d="M1081.5 346.0 L1085.5 354.0 L1081.5 362.0 L1077.5 354.0 Z" fill="#6e6e6e" stroke="#222" stroke-width="0.8"/>
<path d="M1125.8 346.0 L1129.8 354.0 L1125.8 362.0 L1121.8 354.0 Z" fill="#6e6e6e" stroke="#222" stroke-width="0.8"/>
<path d="M1170.0 346.0 L1174.0 354.0 L1170.0 362.0 L1166.0 354.0 Z" fill="#6e6e6e" stroke="#222" stroke-width="0.8"/>
<path d="M1214.3 346.0 L1218.3 354.0 L1214.3 362.0 L1210.3 354.0 Z" fill="#6e6e6e" stroke="#222" stroke-width="0.8"/>
<path d="M1258.5 346.0 L1262.5 354.0 L1258.5 362.0 L1254.5 354.0 Z" fill="#6e6e6e" stroke="#222" stroke-width="0.8"/>
<path d="M1302.8 346.0 L1306.8 354.0 L1302.8 362.0 L1298.8 354.0 Z" fill="#6e6e6e" stroke="#222" stroke-width="0.8"/>
<path d="M713.3 346.0 L717.3 354.0 L713.3 362.0 L709.3 354.0 Z" fill="#6e6e6e" stroke="#222" stroke-width="0.8"/>
<path d="M1388.5 346.0 L1392.5 354.0 L1388.5 362.0 L1384.5 354.0 Z" fill="#ee2222" stroke="#222" stroke-width="0.8"/>
<rect x="213" y="364.2" width="368.5" height="19.8" fill="#fff"/><path d="M213 364.5 H581.5 M213 384 H581.5" stroke="#111" stroke-width="1.3"/>
<line x1="581" y1="374.2" x2="607" y2="374.2" stroke="#111" stroke-width="1.2"/>
<line x1="1393" y1="374.2" x2="1711" y2="374.2" stroke="#111" stroke-width="1.2"/>
<path d="M609 364.5 H1390.5 L1393 374.2 L1390.5 383.8 H609 L606.5 374.2 Z" fill="#fff" stroke="#e8141c" stroke-width="3"/>
<path d="M610 366.3 H1389 M610 382 H1389" stroke="#222" stroke-width="0.7"/>
<path d="M213.5 366.6 H244.6 L248.6 374.5 L244.6 382.4 H213.5 Z" fill="#6a7fd9" stroke="#222" stroke-width="0.8"/><text x="230" y="378.8" text-anchor="middle" font-family="Liberation Sans" font-size="12" fill="#fff">00</text>
<path d="M255.6 374.5 L259.6 366.6 H310.0 L314.0 374.5 L310.0 382.4 H259.6 Z" fill="#6a7fd9" stroke="#222" stroke-width="0.8"/><text x="284.8" y="378.8" text-anchor="middle" font-family="Liberation Sans" font-size="12" fill="#fff">Data - 57</text>
<path d="M314.6 374.5 L318.6 366.6 H384.3 L388.3 374.5 L384.3 382.4 H318.6 Z" fill="#6a7fd9" stroke="#222" stroke-width="0.8"/><text x="351.5" y="378.8" text-anchor="middle" font-family="Liberation Sans" font-size="12" fill="#fff">Data - FE</text>
<path d="M388.8 374.5 L392.8 366.6 H442.8 L446.8 374.5 L442.8 382.4 H392.8 Z" fill="#45b3ef" stroke="#222" stroke-width="0.8"/><text x="417.8" y="378.8" text-anchor="middle" font-family="Liberation Sans" font-size="11" fill="#fff">CRC - 03</text>
<path d="M447.9 374.5 L451.9 366.6 H501.8 L505.8 374.5 L501.8 382.4 H451.9 Z" fill="#45b3ef" stroke="#222" stroke-width="0.8"/><text x="476.9" y="378.8" text-anchor="middle" font-family="Liberation Sans" font-size="10.8" fill="#fff">CRC - AC</text>
<path d="M507.0 374.5 L510.2 366.6 H510.2 L513.4 374.5 L510.2 382.4 H510.2 Z" fill="#c8c8c8" stroke="#222" stroke-width="0.8"/>
<path d="M514.0 374.5 L517.5 366.6 H517.5 L521.0 374.5 L517.5 382.4 H517.5 Z" fill="#f4e040" stroke="#222" stroke-width="0.8"/>
<path d="M524.5 374.5 L528.2 366.6 H528.3 L532.0 374.5 L528.3 382.4 H528.2 Z" fill="#c8c8c8" stroke="#222" stroke-width="0.8"/>
<path d="M533.3 374.5 L537.3 366.6 H579.5 L583.5 374.5 L579.5 382.4 H537.3 Z" fill="#c445d8" stroke="#222" stroke-width="0.8"/><text x="558.4" y="378.8" text-anchor="middle" font-family="Liberation Sans" font-size="12" fill="#fff">14 μs</text>
<path d="M607.0 374.5 L611.0 366.6 H611.0 L615.0 374.5 L611.0 382.4 H611.0 Z" fill="#d7e9f7" stroke="#222" stroke-width="0.8"/>
<path d="M614.5 374.5 L618.5 366.6 H690.0 L694.0 374.5 L690.0 382.4 H618.5 Z" fill="#f6b22c" stroke="#222" stroke-width="0.8"/><text x="654.2" y="378.8" text-anchor="middle" font-family="Liberation Sans" font-size="11.2" fill="#333">ID - 3D8</text>
<path d="M694.6 374.5 L698.1 366.6 H698.1 L701.6 374.5 L698.1 382.4 H698.1 Z" fill="#66cc66" stroke="#222" stroke-width="0.8"/>
<path d="M716.2 374.5 L720.2 366.6 H720.4 L724.4 374.5 L720.4 382.4 H720.2 Z" fill="#66cc66" stroke="#222" stroke-width="0.8"/>
<path d="M725.0 374.5 L729.0 366.6 H749.0 L753.0 374.5 L749.0 382.4 H729.0 Z" fill="#66cc66" stroke="#222" stroke-width="0.8"/><text x="739.0" y="378.8" text-anchor="middle" font-family="Liberation Sans" font-size="12" fill="#fff">8</text>
<path d="M754.0 374.5 L758.0 366.6 H822.8 L826.8 374.5 L822.8 382.4 H758.0 Z" fill="#6a7fd9" stroke="#222" stroke-width="0.8"/><text x="790.4" y="378.8" text-anchor="middle" font-family="Liberation Sans" font-size="12" fill="#fff">Data - 00</text>
<path d="M827.7 374.5 L831.7 366.6 H888.6 L892.6 374.5 L888.6 382.4 H831.7 Z" fill="#6a7fd9" stroke="#222" stroke-width="0.8"/><text x="860.2" y="378.8" text-anchor="middle" font-family="Liberation Sans" font-size="12" fill="#fff">Data - 00</text>
<path d="M893.4 374.5 L897.4 366.6 H962.2 L966.2 374.5 L962.2 382.4 H897.4 Z" fill="#6a7fd9" stroke="#222" stroke-width="0.8"/><text x="929.8" y="378.8" text-anchor="middle" font-family="Liberation Sans" font-size="12" fill="#fff">Data - 00</text>
<path d="M967.0 374.5 L971.0 366.6 H1030.6 L1034.6 374.5 L1030.6 382.4 H971.0 Z" fill="#6a7fd9" stroke="#222" stroke-width="0.8"/><text x="1000.8" y="378.8" text-anchor="middle" font-family="Liberation Sans" font-size="12" fill="#fff">Data - 00</text>
<path d="M1041.7 374.5 L1045.7 366.6 H1102.6 L1106.6 374.5 L1102.6 382.4 H1045.7 Z" fill="#6a7fd9" stroke="#222" stroke-width="0.8"/><text x="1074.2" y="378.8" text-anchor="middle" font-family="Liberation Sans" font-size="12" fill="#fff">Data - 00</text>
<path d="M1107.1 374.5 L1111.1 366.6 H1176.8 L1180.8 374.5 L1176.8 382.4 H1111.1 Z" fill="#6a7fd9" stroke="#222" stroke-width="0.8"/><text x="1143.9" y="378.8" text-anchor="middle" font-family="Liberation Sans" font-size="12" fill="#fff">Data - 00</text>
<path d="M1181.4 374.5 L1185.4 366.6 H1244.0 L1248.0 374.5 L1244.0 382.4 H1185.4 Z" fill="#6a7fd9" stroke="#222" stroke-width="0.8"/><text x="1214.7" y="378.8" text-anchor="middle" font-family="Liberation Sans" font-size="12" fill="#fff">Data - 00</text>
<path d="M1249.0 374.5 L1253.0 366.6 H1317.3 L1321.3 374.5 L1317.3 382.4 H1253.0 Z" fill="#6a7fd9" stroke="#222" stroke-width="0.8"/><text x="1285.2" y="378.8" text-anchor="middle" font-family="Liberation Sans" font-size="12" fill="#fff">Data - 00</text>
</svg>
<div class="t" style="left:100px;top:113.5px;width:78.5px;text-align:right;font-size:12px;color:#c0183a;">2.723</div>
<div class="t" style="left:150px;top:113.5px;width:62px;text-align:right;font-size:12px;color:#4a2a52;">13.61</div>
<div class="t" style="left:100px;top:162.5px;width:78.5px;text-align:right;font-size:12px;color:#c0183a;">2.042</div>
<div class="t" style="left:150px;top:162.5px;width:62px;text-align:right;font-size:12px;color:#4a2a52;">10.88</div>
<div class="t" style="left:100px;top:211.5px;width:78.5px;text-align:right;font-size:12px;color:#c0183a;">1.362</div>
<div class="t" style="left:150px;top:211.5px;width:62px;text-align:right;font-size:12px;color:#4a2a52;">8.163</div>
<div class="t" style="left:100px;top:259.5px;width:78.5px;text-align:right;font-size:12px;color:#c0183a;">0.681</div>
<div class="t" style="left:150px;top:259.5px;width:62px;text-align:right;font-size:12px;color:#4a2a52;">5.442</div>
<div class="t" style="left:100px;top:308.5px;width:78.5px;text-align:right;font-size:12px;color:#c0183a;">0.001</div>
<div class="t" style="left:152px;top:308.5px;width:62px;text-align:right;font-size:12px;color:#4a2a52;">2.72</div>
<div class="t" style="left:100px;top:357.5px;width:78.5px;text-align:right;font-size:12px;color:#c0183a;">-0.679</div>
<div class="t" style="left:150px;top:357.5px;width:62px;text-align:right;font-size:12px;color:#4a2a52;">-0.002</div>
<div class="t" style="left:100px;top:405.5px;width:78.5px;text-align:right;font-size:12px;color:#c0183a;">-1.36</div>
<div class="t" style="left:150px;top:405.5px;width:62px;text-align:right;font-size:12px;color:#4a2a52;">-2.723</div>
<div class="t" style="left:100px;top:454.5px;width:78.5px;text-align:right;font-size:12px;color:#c0183a;">-2.04</div>
<div class="t" style="left:150px;top:454.5px;width:62px;text-align:right;font-size:12px;color:#4a2a52;">-5.445</div>
<div class="t" style="left:100px;top:503.5px;width:78.5px;text-align:right;font-size:12px;color:#c0183a;">-2.721</div>
<div class="t" style="left:150px;top:503.5px;width:62px;text-align:right;font-size:12px;color:#4a2a52;">-8.166</div>
<div class="t" style="left:100px;top:552.5px;width:78.5px;text-align:right;font-size:12px;color:#c0183a;">-3.401</div>
<div class="t" style="left:150px;top:552.5px;width:62px;text-align:right;font-size:12px;color:#4a2a52;">-10.89</div>
<div class="a" style="left:146px;top:65px;width:33px;height:13px;border:1px solid #c0183a;border-radius:2px;background:#fff;"></div>
<div class="t" style="left:147px;top:66px;font-size:12px;color:#c0183a;">3.403</div>
<svg class="a" style="left:178px;top:64px" width="45" height="17"><path d="M3 1 H35 L41.5 8 L35 15 H3 Z" fill="#fff" stroke="#4a2a52" stroke-width="1"/><path d="M35 1 L41.5 8 L35 15 Z" fill="#4a2a52"/><path d="M1 4 L5 8 L1 12 Z" fill="#e0143a"/></svg>
<div class="t" style="left:182px;top:66px;font-size:12px;color:#4a2a52;">16.33</div>
<div class="t" style="left:171px;top:83px;font-size:12px;color:#c0183a;">V</div>
<div class="t" style="left:205px;top:83px;font-size:12px;color:#4a2a52;">V</div>
<svg class="a" style="left:207px;top:310px" width="9" height="12"><path d="M8.5 1 L2.5 5.8 L8.5 10.6 Z" fill="#f2f040"/><path d="M7 1.2 L2.2 5.8 L7 10.4" fill="none" stroke="#222" stroke-width="1"/></svg>

<div class="t" style="left:210px;top:564px;font-size:12px;color:#222;">300.0 μs</div>
<div class="t" style="left:267px;top:564px;font-size:12px;color:#c0182a;">+94.0 ms</div>
<div class="t" style="left:380.2px;top:564px;width:60px;text-align:center;font-size:12px;color:#222;">350.0</div>
<div class="t" style="left:564.6px;top:564px;width:60px;text-align:center;font-size:12px;color:#222;">400.0</div>
<div class="t" style="left:749.0px;top:564px;width:60px;text-align:center;font-size:12px;color:#222;">450.0</div>
<div class="t" style="left:933.4px;top:564px;width:60px;text-align:center;font-size:12px;color:#222;">500.0</div>
<div class="t" style="left:1117.8px;top:564px;width:60px;text-align:center;font-size:12px;color:#222;">550.0</div>
<div class="t" style="left:1302.2px;top:564px;width:60px;text-align:center;font-size:12px;color:#222;">600.0</div>
<div class="t" style="left:1486.6px;top:564px;width:60px;text-align:center;font-size:12px;color:#222;">650.0</div>
<svg class="a" style="left:192px;top:550px" width="40" height="31"><path d="M22 2.5 L28 9 H16 Z" fill="#10569a"/><path d="M3 29 V11 Q3 9 5 9 H36 Q38 9 38 11 V29" fill="none" stroke="#1f4f7f" stroke-width="1"/></svg>
<svg class="a" style="left:278px;top:522px" width="26" height="26"><circle cx="13" cy="13" r="12.5" fill="#1a7cc9"/><path d="M15.5 7 L9.5 13 L15.5 19" fill="none" stroke="#fff" stroke-width="3" stroke-linecap="round" stroke-linejoin="round"/></svg>
<div class="t" style="left:213px;top:387px;font-size:12px;color:#3d2a45;">CAN - Ch C-B</div>
<svg class="a" style="left:212px;top:400px" width="21" height="19"><path d="M10.5 1 L20 18 H1 Z" fill="#f5e50a" stroke="#222" stroke-width="1.3" stroke-linejoin="round"/><path d="M10.5 6 V12.5" stroke="#111" stroke-width="2"/><circle cx="10.5" cy="15" r="1.1" fill="#111"/></svg>
<div class="t" style="left:236px;top:403px;font-size:12px;color:#4a2a52;">Sample rate may be too low</div>

<div class="a" style="left:1527px;top:391px;width:190px;height:181px;background:#fff;border:1px solid #9cc3e8;border-radius:4px 0 0 0;"></div>
<div class="a" style="left:1527px;top:391px;width:190px;height:17px;background:#92bfe9;border-radius:4px 0 0 0;"></div>
<div class="t" style="left:1530px;top:394px;font-size:12px;font-weight:bold;color:#fff;">Zoom</div>
<svg class="a" style="left:1527px;top:408px" width="184" height="165">
 <g stroke="#abc2c8" stroke-width="1"><line x1="37" y1="10.5" x2="184" y2="10.5" stroke-dasharray="3 3"/><line x1="37" y1="19.5" x2="184" y2="19.5" stroke-dasharray="3 3"/><line x1="37" y1="28.5" x2="184" y2="28.5" stroke-dasharray="3 3"/><line x1="37" y1="38.5" x2="184" y2="38.5" stroke-dasharray="3 3"/><line x1="37" y1="47.5" x2="184" y2="47.5" stroke-dasharray="3 3"/><line x1="37" y1="56.5" x2="184" y2="56.5" stroke-dasharray="3 3"/><line x1="37" y1="65.5" x2="184" y2="65.5" stroke-dasharray="3 3"/><line x1="37" y1="75.5" x2="184" y2="75.5" stroke-dasharray="3 3"/><line x1="37" y1="84.5" x2="184" y2="84.5" stroke-dasharray="3 3"/><line x1="37" y1="93.5" x2="184" y2="93.5" stroke-dasharray="3 3"/><line x1="37" y1="103.5" x2="184" y2="103.5" stroke-dasharray="3 3"/><line x1="37.5" y1="10" x2="37.5" y2="104" stroke-dasharray="2 7"/><line x1="61.5" y1="10" x2="61.5" y2="104" stroke-dasharray="2 7"/><line x1="85.5" y1="10" x2="85.5" y2="104" stroke-dasharray="2 7"/><line x1="109.5" y1="10" x2="109.5" y2="104" stroke-dasharray="2 7"/><line x1="132.5" y1="10" x2="132.5" y2="104" stroke-dasharray="2 7"/><line x1="156.5" y1="10" x2="156.5" y2="104" stroke-dasharray="2 7"/><line x1="180.5" y1="10" x2="180.5" y2="104" stroke-dasharray="2 7"/></g>
 <rect x="37" y="30" width="66" height="8" fill="#e8102e"/>
 <path d="M37 37 L40 36 L42 38 L45 36 L48 39 L51 36 L54 38 L57 36 L60 39 L63 37 L66 36 L69 39 L72 37 L75 36 L78 38 L81 36 L84 39 L87 37 L90 36 L93 38 L96 36 L99 38 L103 36 V50 H37 Z" fill="#13904a"/>
 <path d="M37 50 L40 49 L42 52 L45 49 L48 51 L51 48 L54 52 L57 49 L60 51 L63 48 L66 52 L69 49 L72 51 L75 48 L78 52 L81 49 L84 51 L87 48 L90 52 L93 49 L96 51 L99 48 L103 50 V61 H37 Z" fill="#5a2065"/>
 <line x1="60.5" y1="22" x2="60.5" y2="85" stroke="#777" stroke-width="1.2"/>
 <path d="M53 39 V43 M53 41 H67 M67 39 V43" stroke="#bbb" stroke-width="0.9" fill="none"/>
</svg>
<svg class="a" style="left:1532px;top:415px" width="30" height="100">
 <circle cx="14" cy="14" r="12.5" fill="#fff" stroke="#9cc3e8" stroke-width="1"/>
 <path d="M9 14 H19 M14 9 V19" stroke="#10467e" stroke-width="2.4"/>
 <rect x="12" y="33" width="4" height="24" fill="#d8d8dc"/>
 <circle cx="14" cy="61" r="7" fill="#92bfe9"/>
 <circle cx="14" cy="85" r="12.5" fill="#fff" stroke="#9cc3e8" stroke-width="1"/>
 <path d="M9 85 H19" stroke="#10467e" stroke-width="2.4"/>
</svg>
<svg class="a" style="left:1565px;top:515px" width="146" height="30">
 <circle cx="15" cy="15" r="12.5" fill="#fff" stroke="#9cc3e8" stroke-width="1"/>
 <path d="M10 15 H20" stroke="#10467e" stroke-width="2.4"/>
 <rect x="34" y="13.5" width="112" height="3" fill="#d8d8dc"/>
</svg>
<div class="t" style="left:1537px;top:543px;font-size:9.3px;color:#333;">x1.5</div>
<div class="t" style="left:1537px;top:557px;font-size:9.3px;color:#333;">x4,694.8</div>
<div class="a" style="left:1588px;top:543px;width:82px;height:20px;border:1px solid #9cc3e8;border-radius:3px;background:#fff;overflow:hidden;">
 <div class="a" style="left:0;top:0;width:41px;height:20px;background:#10569a;"></div>
</div>
<svg class="a" style="left:1598px;top:544px" width="20" height="19"><circle cx="7.5" cy="7.5" r="5" fill="none" stroke="#fff" stroke-width="1.8"/><path d="M5 7.5 H10 M7.5 5 V10" stroke="#fff" stroke-width="1.4"/><path d="M11 11 L16.5 16.5" stroke="#fff" stroke-width="2.4" stroke-linecap="round"/></svg>
<svg class="a" style="left:1643px;top:544px" width="18" height="19"><path d="M4 17 Q1.5 13 1.5 11 Q1.5 9.5 3 10.2 L5 12 V3.5 Q5 2.5 6 2.5 Q7 2.5 7 3.5 V9 V2 Q7 1 8 1 Q9 1 9 2 V9 V2.5 Q9 1.5 10 1.5 Q11 1.5 11 2.5 V9 V4 Q11 3 12 3 Q13 3 13 4 V12 Q13 15.5 11 17.5 Z" fill="#10569a"/></svg>
<svg class="a" style="left:1692px;top:546px" width="19" height="16"><path d="M19 8 Q14 3 8 6 L8.5 2 L1 9.5 L9.5 14 L8.8 10 Q13 8 17 11 Z" fill="#10569a"/></svg>


<!-- ===== BOTTOM PANEL ===== -->
<div class="a" style="left:145px;top:586px;width:1566px;height:347px;background:#fff;"></div>

<div class="a" style="left:145px;top:579px;width:1566px;height:7px;background:#f0f0f0;"></div>
<svg class="a" style="left:840px;top:584px" width="290" height="24">
 <path d="M8 2.5 L18.5 20.5 H130.5 L141 2.5" fill="none" stroke="#1a5488" stroke-width="2.2"/>
 <path d="M142.3 2.5 L152.9 20.5 H265 L276.8 2.5" fill="none" stroke="#9cc3e8" stroke-width="1"/>
</svg>
<div class="t" style="left:878px;top:591px;font-size:11.5px;color:#1a4f86;">CAN - Ch C-B</div>
<div class="t" style="left:959px;top:590px;font-size:13px;color:#1a4f86;">×</div>
<div class="t" style="left:1009px;top:591px;font-size:11.5px;color:#1a4f86;">Channel Labels</div>
<div class="t" style="left:1095px;top:590px;font-size:13px;color:#1a4f86;">×</div>

<div class="a" style="left:149px;top:608px;width:78px;height:20px;border:1px solid #a9c6e3;border-radius:4px;background:#fff;"></div>
<div class="a" style="left:237px;top:608px;width:107px;height:20px;border:1px solid #a9c6e3;border-radius:4px;background:#fff;"></div>
<div class="a" style="left:353px;top:608px;width:75px;height:20px;border:1px solid #a9c6e3;border-radius:4px;background:#fff;"></div>
<div class="a" style="left:437px;top:608px;width:38px;height:20px;border:1px solid #a9c6e3;border-radius:4px;background:#fff;"></div>
<div class="a" style="left:480px;top:608px;width:38px;height:20px;border:1px solid #a9c6e3;border-radius:4px;background:#fff;"></div>

<svg class="a" style="left:157px;top:610px" width="20" height="18"><path d="M9 3 H2 V16 H15 V11" fill="none" stroke="#10569a" stroke-width="2.2"/><path d="M6 12 Q7 6 13 6 V2.5 L19 7.5 L13 12.5 V9 Q9 9 6 12 Z" fill="#10569a"/></svg>
<div class="t" style="left:184px;top:613px;font-size:12px;color:#1a4f86;">Export</div>
<svg class="a" style="left:246px;top:610px" width="17" height="17"><rect x="1.8" y="8.2" width="8" height="5" rx="2.5" transform="rotate(-45 5.8 10.7)" fill="none" stroke="#10569a" stroke-width="1.6"/><rect x="7.2" y="2.8" width="8" height="5" rx="2.5" transform="rotate(-45 11.2 5.3)" fill="none" stroke="#10569a" stroke-width="1.6"/></svg>
<div class="t" style="left:272px;top:613px;font-size:12px;color:#1a4f86;">Data to text</div>
<svg class="a" style="left:359px;top:611px" width="25" height="15"><rect x="1" y="1" width="23" height="13" fill="#fff" stroke="#10569a" stroke-width="1.6"/><path d="M1 4 H24" stroke="#10569a" stroke-width="2.5"/><path d="M7 1 V14 M12.5 1 V14 M18 1 V14" stroke="#10569a" stroke-width="1.4"/><rect x="8" y="5" width="4" height="8" fill="#7fa8d2"/></svg>
<div class="t" style="left:389px;top:613px;font-size:12px;color:#1a4f86;">Fields</div>
<div class="t" style="left:447px;top:608px;font-size:21px;font-weight:bold;color:#10569a;">A</div>
<svg class="a" style="left:461px;top:611px" width="7" height="4"><path d="M0.5 3.5 L3.5 0 L6.5 3.5 Z" fill="#10569a"/></svg>
<div class="t" style="left:491px;top:613px;font-size:17px;font-weight:bold;color:#10569a;">A</div>
<svg class="a" style="left:503px;top:611px" width="7" height="4"><path d="M0.5 0 L3.5 3.5 L6.5 0 Z" fill="#10569a"/></svg>
<div class="a" style="left:527px;top:608px;width:166px;height:20px;border:1px solid #a9c6e3;border-radius:4px;background:#fff;overflow:hidden;"><div class="a" style="left:0;top:0;width:83px;height:20px;background:#10569a;"></div></div>
<div class="t" style="left:543px;top:613px;font-size:12px;color:#fff;">All buffers</div>
<div class="t" style="left:616px;top:613px;font-size:12px;color:#1a4f86;">Current buffer</div>

<div class="a" style="left:1323px;top:608px;width:95px;height:20px;border:1px solid #a9c6e3;border-radius:4px;background:#fff;"></div>
<svg class="a" style="left:1334px;top:610px" width="14" height="17"><path d="M1 1.5 H13 L8.3 8 V15.5 L5.7 14 V8 Z" fill="none" stroke="#10569a" stroke-width="1.2" stroke-linejoin="round"/></svg>
<div class="t" style="left:1358px;top:613px;font-size:12px;color:#1a4f86;">Add Filter</div>
<div class="t" style="left:1428px;top:614px;font-size:11.2px;color:#333;">Search:</div>
<div class="a" style="left:1471px;top:608px;width:123px;height:20px;border:1px solid #a9c6e3;border-radius:3px;background:#fff;"></div>
<div class="t" style="left:1474px;top:614px;font-size:12px;color:#1a4f86;">All fields</div>
<svg class="a" style="left:1585px;top:614px" width="8" height="8"><path d="M0 0.5 H8 L4 7.5 Z" fill="#10467e"/></svg>
<div class="a" style="left:1601px;top:608px;width:115px;height:20px;border:1px solid #a9c6e3;border-radius:3px 0 0 3px;background:#fff;"></div>
<div class="t" style="left:1604px;top:614px;font-size:11.5px;color:#9a9a9a;">[Enter value]</div>

<div class="a" style="left:150px;top:636px;width:1561px;height:26px;background:#92bfea;"></div>
<div class="a" style="left:1138px;top:636px;width:54px;height:26px;background:#6a9fd1;"></div>
<div class="a" style="left:150px;top:663px;width:1561px;height:26px;background:#deebf8;"></div>
<div class="a" style="left:150px;top:690px;width:1561px;height:26px;background:#fff;"></div>
<div class="a" style="left:150px;top:717px;width:1561px;height:26px;background:#deebf8;"></div>
<div class="a" style="left:150px;top:744px;width:1561px;height:26px;background:#0b5794;"></div>
<div class="a" style="left:150px;top:771px;width:1561px;height:26px;background:#deebf8;"></div>
<div class="a" style="left:150px;top:798px;width:1561px;height:26px;background:#fff;"></div>
<div class="a" style="left:150px;top:825px;width:1561px;height:26px;background:#deebf8;"></div>
<div class="a" style="left:150px;top:852px;width:1561px;height:26px;background:#fff;"></div>
<div class="a" style="left:150px;top:879px;width:1561px;height:26px;background:#deebf8;"></div>
<div class="a" style="left:150px;top:906px;width:1561px;height:25px;background:#fff;"></div>
<div class="a" style="left:150px;top:932px;width:1561px;height:1px;background:#deebf8;"></div>
<div class="a" style="left:150px;top:662px;width:1561px;height:1px;background:#9ea2a6;"></div>
<div class="a" style="left:150px;top:689px;width:1561px;height:1px;background:#9ea2a6;"></div>
<div class="a" style="left:150px;top:716px;width:1561px;height:1px;background:#9ea2a6;"></div>
<div class="a" style="left:150px;top:743px;width:1561px;height:1px;background:#9ea2a6;"></div>
<div class="a" style="left:150px;top:770px;width:1561px;height:1px;background:#9ea2a6;"></div>
<div class="a" style="left:150px;top:797px;width:1561px;height:1px;background:#9ea2a6;"></div>
<div class="a" style="left:150px;top:824px;width:1561px;height:1px;background:#9ea2a6;"></div>
<div class="a" style="left:150px;top:851px;width:1561px;height:1px;background:#9ea2a6;"></div>
<div class="a" style="left:150px;top:878px;width:1561px;height:1px;background:#9ea2a6;"></div>
<div class="a" style="left:150px;top:905px;width:1561px;height:1px;background:#9ea2a6;"></div>
<div class="a" style="left:150px;top:931px;width:1561px;height:1px;background:#9ea2a6;"></div>
<div class="a" style="left:150px;top:635px;width:1561px;height:1px;background:#9ea2a6;"></div>
<div class="a" style="left:150px;top:635px;width:1px;height:298px;background:#9ea2a6;"></div>
<div class="a" style="left:252px;top:635px;width:1px;height:298px;background:#9ea2a6;"></div>
<div class="a" style="left:315px;top:635px;width:1px;height:298px;background:#9ea2a6;"></div>
<div class="a" style="left:397px;top:635px;width:1px;height:298px;background:#9ea2a6;"></div>
<div class="a" style="left:475px;top:635px;width:1px;height:298px;background:#9ea2a6;"></div>
<div class="a" style="left:545px;top:635px;width:1px;height:298px;background:#9ea2a6;"></div>
<div class="a" style="left:594px;top:635px;width:1px;height:298px;background:#9ea2a6;"></div>
<div class="a" style="left:643px;top:635px;width:1px;height:298px;background:#9ea2a6;"></div>
<div class="a" style="left:693px;top:635px;width:1px;height:298px;background:#9ea2a6;"></div>
<div class="a" style="left:840px;top:635px;width:1px;height:298px;background:#9ea2a6;"></div>
<div class="a" style="left:890px;top:635px;width:1px;height:298px;background:#9ea2a6;"></div>
<div class="a" style="left:941px;top:635px;width:1px;height:298px;background:#9ea2a6;"></div>
<div class="a" style="left:1021px;top:635px;width:1px;height:298px;background:#9ea2a6;"></div>
<div class="a" style="left:1137px;top:635px;width:1px;height:298px;background:#9ea2a6;"></div>
<div class="a" style="left:1192px;top:635px;width:1px;height:298px;background:#9ea2a6;"></div>
<div class="a" style="left:1238px;top:635px;width:1px;height:298px;background:#9ea2a6;"></div>
<div class="t" style="left:155.5px;top:644px;font-size:12px;color:#fff;transform:scaleX(1.006);transform-origin:0 0;">Buffer Number</div>
<svg class="a" style="left:238.5px;top:643px" width="9" height="12"><path d="M0.5 4.8 L4.5 0.5 L8.5 4.8 Z M0.5 7 L4.5 11.3 L8.5 7 Z" fill="#fff"/></svg>
<div class="t" style="left:262.7px;top:644px;font-size:12px;color:#fff;transform:scaleX(0.938);transform-origin:0 0;">Packet</div>
<svg class="a" style="left:301.5px;top:643px" width="9" height="12"><path d="M0.5 4.8 L4.5 0.5 L8.5 4.8 Z M0.5 7 L4.5 11.3 L8.5 7 Z" fill="#fff"/></svg>
<div class="t" style="left:325.7px;top:644px;font-size:12px;color:#fff;transform:scaleX(0.969);transform-origin:0 0;">Start Time</div>
<svg class="a" style="left:383.5px;top:643px" width="9" height="12"><path d="M0.5 4.8 L4.5 0.5 L8.5 4.8 Z M0.5 7 L4.5 11.3 L8.5 7 Z" fill="#fff"/></svg>
<div class="t" style="left:407.7px;top:644px;font-size:12px;color:#fff;transform:scaleX(0.968);transform-origin:0 0;">End Time</div>
<svg class="a" style="left:461.5px;top:643px" width="9" height="12"><path d="M0.5 4.8 L4.5 0.5 L8.5 4.8 Z M0.5 7 L4.5 11.3 L8.5 7 Z" fill="#fff"/></svg>
<div class="t" style="left:485.7px;top:644px;font-size:12px;color:#fff;transform:scaleX(0.875);transform-origin:0 0;">ID</div>
<svg class="a" style="left:531.5px;top:643px" width="9" height="12"><path d="M0.5 4.8 L4.5 0.5 L8.5 4.8 Z M0.5 7 L4.5 11.3 L8.5 7 Z" fill="#fff"/></svg>
<div class="t" style="left:555.7px;top:644px;font-size:12px;color:#fff;transform:scaleX(0.871);transform-origin:0 0;">RTR</div>
<svg class="a" style="left:580.5px;top:643px" width="9" height="12"><path d="M0.5 4.8 L4.5 0.5 L8.5 4.8 Z M0.5 7 L4.5 11.3 L8.5 7 Z" fill="#fff"/></svg>
<div class="t" style="left:604.7px;top:644px;font-size:12px;color:#fff;transform:scaleX(0.883);transform-origin:0 0;">FDF</div>
<svg class="a" style="left:629.5px;top:643px" width="9" height="12"><path d="M0.5 4.8 L4.5 0.5 L8.5 4.8 Z M0.5 7 L4.5 11.3 L8.5 7 Z" fill="#fff"/></svg>
<div class="t" style="left:653.7px;top:644px;font-size:12px;color:#fff;transform:scaleX(0.887);transform-origin:0 0;">DLC</div>
<svg class="a" style="left:679.5px;top:643px" width="9" height="12"><path d="M0.5 4.8 L4.5 0.5 L8.5 4.8 Z M0.5 7 L4.5 11.3 L8.5 7 Z" fill="#fff"/></svg>
<div class="t" style="left:703.7px;top:644px;font-size:12px;color:#fff;transform:scaleX(0.958);transform-origin:0 0;">Data</div>
<svg class="a" style="left:826.5px;top:643px" width="9" height="12"><path d="M0.5 4.8 L4.5 0.5 L8.5 4.8 Z M0.5 7 L4.5 11.3 L8.5 7 Z" fill="#fff"/></svg>
<div class="t" style="left:850.7px;top:644px;font-size:12px;color:#fff;transform:scaleX(0.846);transform-origin:0 0;">CRC</div>
<svg class="a" style="left:876.5px;top:643px" width="9" height="12"><path d="M0.5 4.8 L4.5 0.5 L8.5 4.8 Z M0.5 7 L4.5 11.3 L8.5 7 Z" fill="#fff"/></svg>
<div class="t" style="left:900.7px;top:644px;font-size:12px;color:#fff;transform:scaleX(0.879);transform-origin:0 0;">ACK</div>
<svg class="a" style="left:927.5px;top:643px" width="9" height="12"><path d="M0.5 4.8 L4.5 0.5 L8.5 4.8 Z M0.5 7 L4.5 11.3 L8.5 7 Z" fill="#fff"/></svg>
<div class="t" style="left:951.7px;top:644px;font-size:12px;color:#fff;transform:scaleX(0.918);transform-origin:0 0;">CRC Valid</div>
<svg class="a" style="left:1007.5px;top:643px" width="9" height="12"><path d="M0.5 4.8 L4.5 0.5 L8.5 4.8 Z M0.5 7 L4.5 11.3 L8.5 7 Z" fill="#fff"/></svg>
<div class="t" style="left:1031.7px;top:644px;font-size:12px;color:#fff;transform:scaleX(0.997);transform-origin:0 0;">Bit Stuffing Valid</div>
<svg class="a" style="left:1123.5px;top:643px" width="9" height="12"><path d="M0.5 4.8 L4.5 0.5 L8.5 4.8 Z M0.5 7 L4.5 11.3 L8.5 7 Z" fill="#fff"/></svg>
<div class="t" style="left:1147.7px;top:644px;font-size:12px;color:#fff;transform:scaleX(0.969);transform-origin:0 0;">Valid</div>
<svg class="a" style="left:1178.0px;top:643px" width="9" height="12"><path d="M0.5 5 L4.5 0.5 L8.5 5 Z" fill="#fff"/></svg>
<div class="t" style="left:1202.7px;top:644px;font-size:12px;color:#fff;transform:scaleX(0.834);transform-origin:0 0;">IDE</div>
<svg class="a" style="left:1224.5px;top:643px" width="9" height="12"><path d="M0.5 4.8 L4.5 0.5 L8.5 4.8 Z M0.5 7 L4.5 11.3 L8.5 7 Z" fill="#fff"/></svg>
<div class="t" style="left:150.0px;top:670.5px;width:94.0px;text-align:right;font-size:12px;color:#b3182c;letter-spacing:-0.2px;">8</div>
<div class="t" style="left:252.0px;top:670.5px;width:55.0px;text-align:right;font-size:12px;color:#b3182c;letter-spacing:-0.2px;">207</div>
<div class="t" style="left:315.0px;top:670.5px;width:74.0px;text-align:right;font-size:12px;color:#b3182c;letter-spacing:-0.2px;">23 μs</div>
<div class="t" style="left:397.0px;top:670.5px;width:70.0px;text-align:right;font-size:12px;color:#b3182c;letter-spacing:-0.2px;">120 μs</div>
<div class="t" style="left:482.7px;top:670.5px;font-size:12px;color:#b3182c;letter-spacing:-0.2px;">32E</div>
<div class="t" style="left:552.7px;top:670.5px;font-size:12px;color:#b3182c;letter-spacing:-0.2px;">0</div>
<div class="t" style="left:601.7px;top:670.5px;font-size:12px;color:#b3182c;letter-spacing:-0.2px;">1</div>
<div class="t" style="left:650.7px;top:670.5px;font-size:12px;color:#b3182c;letter-spacing:-0.2px;">0</div>
<div class="t" style="left:847.7px;top:670.5px;font-size:12px;color:#b3182c;letter-spacing:-0.2px;">00 00</div>
<div class="t" style="left:897.7px;top:670.5px;font-size:12px;color:#b3182c;letter-spacing:-0.2px;">1</div>
<svg class="a" style="left:949.0px;top:670.0px" width="10" height="12"><path d="M2 1.5 Q5 6 8 11 M8 1 Q4.5 6 2.5 11" fill="none" stroke="#b3182c" stroke-width="1.6" stroke-linecap="round"/></svg>
<svg class="a" style="left:1030.0px;top:670.0px" width="13" height="11"><path d="M1 5.5 L4.5 9.5 L12 1.5" fill="none" stroke="#b3182c" stroke-width="2.4"/></svg>
<svg class="a" style="left:1145.0px;top:670.0px" width="10" height="12"><path d="M2 1.5 Q5 6 8 11 M8 1 Q4.5 6 2.5 11" fill="none" stroke="#b3182c" stroke-width="1.6" stroke-linecap="round"/></svg>
<div class="t" style="left:1199.7px;top:670.5px;font-size:12px;color:#b3182c;letter-spacing:-0.2px;">0</div>
<div class="t" style="left:150.0px;top:697.5px;width:94.0px;text-align:right;font-size:12px;color:#b3182c;letter-spacing:-0.2px;">10</div>
<div class="t" style="left:252.0px;top:697.5px;width:55.0px;text-align:right;font-size:12px;color:#b3182c;letter-spacing:-0.2px;">388</div>
<div class="t" style="left:315.0px;top:697.5px;width:74.0px;text-align:right;font-size:12px;color:#b3182c;letter-spacing:-0.2px;">96.27 ms</div>
<div class="t" style="left:397.0px;top:697.5px;width:70.0px;text-align:right;font-size:12px;color:#b3182c;letter-spacing:-0.2px;">96.31 ms</div>
<div class="t" style="left:482.7px;top:697.5px;font-size:12px;color:#b3182c;letter-spacing:-0.2px;">3B9</div>
<div class="t" style="left:552.7px;top:697.5px;font-size:12px;color:#b3182c;letter-spacing:-0.2px;">0</div>
<div class="t" style="left:601.7px;top:697.5px;font-size:12px;color:#b3182c;letter-spacing:-0.2px;">0</div>
<svg class="a" style="left:949.0px;top:697.0px" width="10" height="12"><path d="M2 1.5 Q5 6 8 11 M8 1 Q4.5 6 2.5 11" fill="none" stroke="#b3182c" stroke-width="1.6" stroke-linecap="round"/></svg>
<svg class="a" style="left:1029.0px;top:697.0px" width="10" height="12"><path d="M2 1.5 Q5 6 8 11 M8 1 Q4.5 6 2.5 11" fill="none" stroke="#b3182c" stroke-width="1.6" stroke-linecap="round"/></svg>
<svg class="a" style="left:1145.0px;top:697.0px" width="10" height="12"><path d="M2 1.5 Q5 6 8 11 M8 1 Q4.5 6 2.5 11" fill="none" stroke="#b3182c" stroke-width="1.6" stroke-linecap="round"/></svg>
<div class="t" style="left:1199.7px;top:697.5px;font-size:12px;color:#b3182c;letter-spacing:-0.2px;">0</div>
<div class="t" style="left:150.0px;top:724.5px;width:94.0px;text-align:right;font-size:12px;color:#b3182c;letter-spacing:-0.2px;">10</div>
<div class="t" style="left:252.0px;top:724.5px;width:55.0px;text-align:right;font-size:12px;color:#b3182c;letter-spacing:-0.2px;">387</div>
<div class="t" style="left:315.0px;top:724.5px;width:74.0px;text-align:right;font-size:12px;color:#b3182c;letter-spacing:-0.2px;">95.93 ms</div>
<div class="t" style="left:397.0px;top:724.5px;width:70.0px;text-align:right;font-size:12px;color:#b3182c;letter-spacing:-0.2px;">95.94 ms</div>
<svg class="a" style="left:949.0px;top:724.0px" width="10" height="12"><path d="M2 1.5 Q5 6 8 11 M8 1 Q4.5 6 2.5 11" fill="none" stroke="#b3182c" stroke-width="1.6" stroke-linecap="round"/></svg>
<svg class="a" style="left:1029.0px;top:724.0px" width="10" height="12"><path d="M2 1.5 Q5 6 8 11 M8 1 Q4.5 6 2.5 11" fill="none" stroke="#b3182c" stroke-width="1.6" stroke-linecap="round"/></svg>
<svg class="a" style="left:1145.0px;top:724.0px" width="10" height="12"><path d="M2 1.5 Q5 6 8 11 M8 1 Q4.5 6 2.5 11" fill="none" stroke="#b3182c" stroke-width="1.6" stroke-linecap="round"/></svg>
<div class="t" style="left:150.0px;top:751.5px;width:94.0px;text-align:right;font-size:12px;color:#b3182c;letter-spacing:-0.2px;">10</div>
<div class="t" style="left:252.0px;top:751.5px;width:55.0px;text-align:right;font-size:12px;color:#b3182c;letter-spacing:-0.2px;">386</div>
<div class="t" style="left:315.0px;top:751.5px;width:74.0px;text-align:right;font-size:12px;color:#b3182c;letter-spacing:-0.2px;">94.4 ms</div>
<div class="t" style="left:397.0px;top:751.5px;width:70.0px;text-align:right;font-size:12px;color:#b3182c;letter-spacing:-0.2px;">94.62 ms</div>
<div class="t" style="left:482.7px;top:751.5px;font-size:12px;color:#b3182c;letter-spacing:-0.2px;">3D8</div>
<div class="t" style="left:552.7px;top:751.5px;font-size:12px;color:#b3182c;letter-spacing:-0.2px;">0</div>
<div class="t" style="left:601.7px;top:751.5px;font-size:12px;color:#b3182c;letter-spacing:-0.2px;">0</div>
<div class="t" style="left:650.7px;top:751.5px;font-size:12px;color:#b3182c;letter-spacing:-0.2px;">8</div>
<div class="t" style="left:700.7px;top:751.5px;font-size:12px;color:#b3182c;letter-spacing:-0.2px;">00 00 00 00 00 00 00 00</div>
<svg class="a" style="left:949.0px;top:751.0px" width="10" height="12"><path d="M2 1.5 Q5 6 8 11 M8 1 Q4.5 6 2.5 11" fill="none" stroke="#b3182c" stroke-width="1.6" stroke-linecap="round"/></svg>
<svg class="a" style="left:1029.0px;top:751.0px" width="10" height="12"><path d="M2 1.5 Q5 6 8 11 M8 1 Q4.5 6 2.5 11" fill="none" stroke="#b3182c" stroke-width="1.6" stroke-linecap="round"/></svg>
<svg class="a" style="left:1145.0px;top:751.0px" width="10" height="12"><path d="M2 1.5 Q5 6 8 11 M8 1 Q4.5 6 2.5 11" fill="none" stroke="#b3182c" stroke-width="1.6" stroke-linecap="round"/></svg>
<div class="t" style="left:1199.7px;top:751.5px;font-size:12px;color:#b3182c;letter-spacing:-0.2px;">0</div>
<div class="t" style="left:150.0px;top:778.5px;width:94.0px;text-align:right;font-size:12px;color:#b3182c;letter-spacing:-0.2px;">8</div>
<div class="t" style="left:252.0px;top:778.5px;width:55.0px;text-align:right;font-size:12px;color:#b3182c;letter-spacing:-0.2px;">1257</div>
<div class="t" style="left:315.0px;top:778.5px;width:74.0px;text-align:right;font-size:12px;color:#b3182c;letter-spacing:-0.2px;">519 ms</div>
<div class="t" style="left:397.0px;top:778.5px;width:70.0px;text-align:right;font-size:12px;color:#b3182c;letter-spacing:-0.2px;">519.1 ms</div>
<svg class="a" style="left:949.0px;top:778.0px" width="10" height="12"><path d="M2 1.5 Q5 6 8 11 M8 1 Q4.5 6 2.5 11" fill="none" stroke="#b3182c" stroke-width="1.6" stroke-linecap="round"/></svg>
<svg class="a" style="left:1029.0px;top:778.0px" width="10" height="12"><path d="M2 1.5 Q5 6 8 11 M8 1 Q4.5 6 2.5 11" fill="none" stroke="#b3182c" stroke-width="1.6" stroke-linecap="round"/></svg>
<svg class="a" style="left:1145.0px;top:778.0px" width="10" height="12"><path d="M2 1.5 Q5 6 8 11 M8 1 Q4.5 6 2.5 11" fill="none" stroke="#b3182c" stroke-width="1.6" stroke-linecap="round"/></svg>
<div class="t" style="left:150.0px;top:805.5px;width:94.0px;text-align:right;font-size:12px;color:#b3182c;letter-spacing:-0.2px;">9</div>
<div class="t" style="left:252.0px;top:805.5px;width:55.0px;text-align:right;font-size:12px;color:#b3182c;letter-spacing:-0.2px;">2937</div>
<div class="t" style="left:315.0px;top:805.5px;width:74.0px;text-align:right;font-size:12px;color:#b3182c;letter-spacing:-0.2px;">1.344s</div>
<div class="t" style="left:397.0px;top:805.5px;width:70.0px;text-align:right;font-size:12px;color:#b3182c;letter-spacing:-0.2px;">1.344s</div>
<div class="t" style="left:482.7px;top:805.5px;font-size:12px;color:#b3182c;letter-spacing:-0.2px;">334</div>
<div class="t" style="left:552.7px;top:805.5px;font-size:12px;color:#b3182c;letter-spacing:-0.2px;">0</div>
<div class="t" style="left:601.7px;top:805.5px;font-size:12px;color:#b3182c;letter-spacing:-0.2px;">1</div>
<div class="t" style="left:650.7px;top:805.5px;font-size:12px;color:#b3182c;letter-spacing:-0.2px;">1</div>
<div class="t" style="left:700.7px;top:805.5px;font-size:12px;color:#b3182c;letter-spacing:-0.2px;">40</div>
<div class="t" style="left:847.7px;top:805.5px;font-size:12px;color:#b3182c;letter-spacing:-0.2px;">00 00</div>
<div class="t" style="left:897.7px;top:805.5px;font-size:12px;color:#b3182c;letter-spacing:-0.2px;">0</div>
<svg class="a" style="left:949.0px;top:805.0px" width="10" height="12"><path d="M2 1.5 Q5 6 8 11 M8 1 Q4.5 6 2.5 11" fill="none" stroke="#b3182c" stroke-width="1.6" stroke-linecap="round"/></svg>
<svg class="a" style="left:1030.0px;top:805.0px" width="13" height="11"><path d="M1 5.5 L4.5 9.5 L12 1.5" fill="none" stroke="#b3182c" stroke-width="2.4"/></svg>
<svg class="a" style="left:1145.0px;top:805.0px" width="10" height="12"><path d="M2 1.5 Q5 6 8 11 M8 1 Q4.5 6 2.5 11" fill="none" stroke="#b3182c" stroke-width="1.6" stroke-linecap="round"/></svg>
<div class="t" style="left:1199.7px;top:805.5px;font-size:12px;color:#b3182c;letter-spacing:-0.2px;">0</div>
<div class="t" style="left:150.0px;top:832.5px;width:94.0px;text-align:right;font-size:12px;color:#b3182c;letter-spacing:-0.2px;">9</div>
<div class="t" style="left:252.0px;top:832.5px;width:55.0px;text-align:right;font-size:12px;color:#b3182c;letter-spacing:-0.2px;">542</div>
<div class="t" style="left:315.0px;top:832.5px;width:74.0px;text-align:right;font-size:12px;color:#b3182c;letter-spacing:-0.2px;">163.5 ms</div>
<div class="t" style="left:397.0px;top:832.5px;width:70.0px;text-align:right;font-size:12px;color:#b3182c;letter-spacing:-0.2px;">163.5 ms</div>
<div class="t" style="left:482.7px;top:832.5px;font-size:12px;color:#b3182c;letter-spacing:-0.2px;">350</div>
<div class="t" style="left:552.7px;top:832.5px;font-size:12px;color:#b3182c;letter-spacing:-0.2px;">0</div>
<div class="t" style="left:601.7px;top:832.5px;font-size:12px;color:#b3182c;letter-spacing:-0.2px;">0</div>
<svg class="a" style="left:949.0px;top:832.0px" width="10" height="12"><path d="M2 1.5 Q5 6 8 11 M8 1 Q4.5 6 2.5 11" fill="none" stroke="#b3182c" stroke-width="1.6" stroke-linecap="round"/></svg>
<svg class="a" style="left:1029.0px;top:832.0px" width="10" height="12"><path d="M2 1.5 Q5 6 8 11 M8 1 Q4.5 6 2.5 11" fill="none" stroke="#b3182c" stroke-width="1.6" stroke-linecap="round"/></svg>
<svg class="a" style="left:1145.0px;top:832.0px" width="10" height="12"><path d="M2 1.5 Q5 6 8 11 M8 1 Q4.5 6 2.5 11" fill="none" stroke="#b3182c" stroke-width="1.6" stroke-linecap="round"/></svg>
<div class="t" style="left:1199.7px;top:832.5px;font-size:12px;color:#b3182c;letter-spacing:-0.2px;">0</div>
<div class="t" style="left:150.0px;top:859.5px;width:94.0px;text-align:right;font-size:12px;color:#b3182c;letter-spacing:-0.2px;">9</div>
<div class="t" style="left:252.0px;top:859.5px;width:55.0px;text-align:right;font-size:12px;color:#b3182c;letter-spacing:-0.2px;">4014</div>
<div class="t" style="left:315.0px;top:859.5px;width:74.0px;text-align:right;font-size:12px;color:#b3182c;letter-spacing:-0.2px;">1.877s</div>
<div class="t" style="left:397.0px;top:859.5px;width:70.0px;text-align:right;font-size:12px;color:#b3182c;letter-spacing:-0.2px;">1.877s</div>
<div class="t" style="left:482.7px;top:859.5px;font-size:12px;color:#b3182c;letter-spacing:-0.2px;">28C</div>
<div class="t" style="left:552.7px;top:859.5px;font-size:12px;color:#b3182c;letter-spacing:-0.2px;">0</div>
<div class="t" style="left:601.7px;top:859.5px;font-size:12px;color:#b3182c;letter-spacing:-0.2px;">1</div>
<div class="t" style="left:650.7px;top:859.5px;font-size:12px;color:#b3182c;letter-spacing:-0.2px;">0</div>
<div class="t" style="left:847.7px;top:859.5px;font-size:12px;color:#b3182c;letter-spacing:-0.2px;">00 28</div>
<div class="t" style="left:897.7px;top:859.5px;font-size:12px;color:#b3182c;letter-spacing:-0.2px;">0</div>
<svg class="a" style="left:949.0px;top:859.0px" width="10" height="12"><path d="M2 1.5 Q5 6 8 11 M8 1 Q4.5 6 2.5 11" fill="none" stroke="#b3182c" stroke-width="1.6" stroke-linecap="round"/></svg>
<svg class="a" style="left:1030.0px;top:859.0px" width="13" height="11"><path d="M1 5.5 L4.5 9.5 L12 1.5" fill="none" stroke="#b3182c" stroke-width="2.4"/></svg>
<svg class="a" style="left:1145.0px;top:859.0px" width="10" height="12"><path d="M2 1.5 Q5 6 8 11 M8 1 Q4.5 6 2.5 11" fill="none" stroke="#b3182c" stroke-width="1.6" stroke-linecap="round"/></svg>
<div class="t" style="left:1199.7px;top:859.5px;font-size:12px;color:#b3182c;letter-spacing:-0.2px;">0</div>
<div class="t" style="left:150.0px;top:886.5px;width:94.0px;text-align:right;font-size:12px;color:#b3182c;letter-spacing:-0.2px;">9</div>
<div class="t" style="left:252.0px;top:886.5px;width:55.0px;text-align:right;font-size:12px;color:#b3182c;letter-spacing:-0.2px;">3331</div>
<div class="t" style="left:315.0px;top:886.5px;width:74.0px;text-align:right;font-size:12px;color:#b3182c;letter-spacing:-0.2px;">1.54s</div>
<div class="t" style="left:397.0px;top:886.5px;width:70.0px;text-align:right;font-size:12px;color:#b3182c;letter-spacing:-0.2px;">1.54s</div>
<svg class="a" style="left:949.0px;top:886.0px" width="10" height="12"><path d="M2 1.5 Q5 6 8 11 M8 1 Q4.5 6 2.5 11" fill="none" stroke="#b3182c" stroke-width="1.6" stroke-linecap="round"/></svg>
<svg class="a" style="left:1029.0px;top:886.0px" width="10" height="12"><path d="M2 1.5 Q5 6 8 11 M8 1 Q4.5 6 2.5 11" fill="none" stroke="#b3182c" stroke-width="1.6" stroke-linecap="round"/></svg>
<svg class="a" style="left:1145.0px;top:886.0px" width="10" height="12"><path d="M2 1.5 Q5 6 8 11 M8 1 Q4.5 6 2.5 11" fill="none" stroke="#b3182c" stroke-width="1.6" stroke-linecap="round"/></svg>
<div class="t" style="left:150.0px;top:913.5px;width:94.0px;text-align:right;font-size:12px;color:#b3182c;letter-spacing:-0.2px;">9</div>
<div class="t" style="left:252.0px;top:913.5px;width:55.0px;text-align:right;font-size:12px;color:#b3182c;letter-spacing:-0.2px;">1125</div>
<div class="t" style="left:315.0px;top:913.5px;width:74.0px;text-align:right;font-size:12px;color:#b3182c;letter-spacing:-0.2px;">449.3 ms</div>
<div class="t" style="left:397.0px;top:913.5px;width:70.0px;text-align:right;font-size:12px;color:#b3182c;letter-spacing:-0.2px;">449.3 ms</div>
<div class="t" style="left:482.7px;top:913.5px;font-size:12px;color:#b3182c;letter-spacing:-0.2px;">511</div>
<div class="t" style="left:552.7px;top:913.5px;font-size:12px;color:#b3182c;letter-spacing:-0.2px;">0</div>
<div class="t" style="left:601.7px;top:913.5px;font-size:12px;color:#b3182c;letter-spacing:-0.2px;">0</div>
<div class="t" style="left:650.7px;top:913.5px;font-size:12px;color:#b3182c;letter-spacing:-0.2px;">8</div>
<svg class="a" style="left:949.0px;top:913.0px" width="10" height="12"><path d="M2 1.5 Q5 6 8 11 M8 1 Q4.5 6 2.5 11" fill="none" stroke="#b3182c" stroke-width="1.6" stroke-linecap="round"/></svg>
<svg class="a" style="left:1029.0px;top:913.0px" width="10" height="12"><path d="M2 1.5 Q5 6 8 11 M8 1 Q4.5 6 2.5 11" fill="none" stroke="#b3182c" stroke-width="1.6" stroke-linecap="round"/></svg>
<svg class="a" style="left:1145.0px;top:913.0px" width="10" height="12"><path d="M2 1.5 Q5 6 8 11 M8 1 Q4.5 6 2.5 11" fill="none" stroke="#b3182c" stroke-width="1.6" stroke-linecap="round"/></svg>
<div class="t" style="left:1199.7px;top:913.5px;font-size:12px;color:#b3182c;letter-spacing:-0.2px;">0</div>

</body></html>
